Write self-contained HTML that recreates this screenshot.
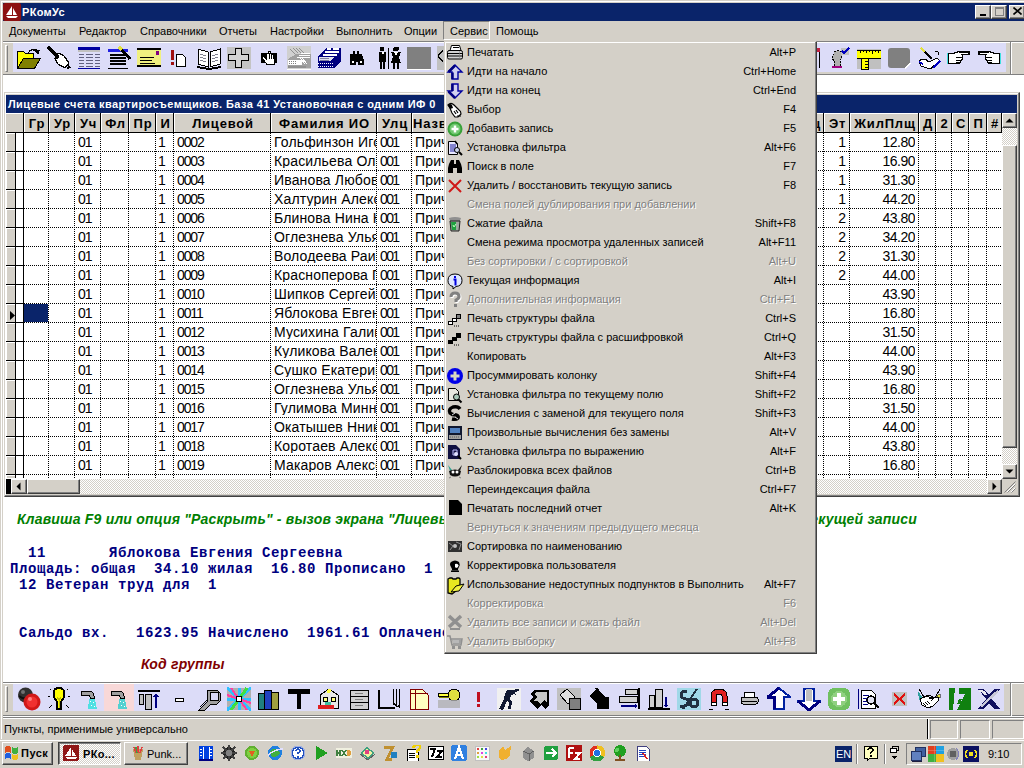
<!DOCTYPE html><html><head><meta charset="utf-8"><style>
*{margin:0;padding:0;box-sizing:border-box}
html,body{width:1024px;height:768px;overflow:hidden;background:#d4d0c8;font-family:"Liberation Sans",sans-serif;font-size:11px;color:#000}
div,span,svg{position:absolute}
.t{white-space:nowrap;line-height:1}
.raised{border-top:1px solid #fff;border-left:1px solid #fff;border-right:1px solid #404040;border-bottom:1px solid #404040;box-shadow:inset -1px -1px 0 #808080}
.sunken{border-top:1px solid #808080;border-left:1px solid #808080;border-right:1px solid #fff;border-bottom:1px solid #fff}
.dither{background-color:#fff;background-image:linear-gradient(45deg,#d4d0c8 25%,transparent 25%,transparent 75%,#d4d0c8 75%),linear-gradient(45deg,#d4d0c8 25%,transparent 25%,transparent 75%,#d4d0c8 75%);background-size:2px 2px;background-position:0 0,1px 1px}
</style></head><body>

<div style="left:0px;top:0px;width:1024px;height:740px;background:#d4d0c8;border-top:1px solid #d4d0c8;border-left:1px solid #d4d0c8"></div>
<div style="left:1px;top:1px;width:1023px;height:1px;background:#fff"></div>
<div style="left:1px;top:1px;width:1px;height:739px;background:#fff"></div>
<div style="left:3px;top:3px;width:1021px;height:18px;background:#0a246a"></div>
<svg style="left:3px;top:3px" width="18" height="18" viewBox="-1 -1 18 18"><rect x="-1" y="-1" width="18" height="18" rx="2" fill="#8c1010"/><path d="M8 2 L8 11 L2 11 Z" fill="#fff"/><path d="M9 4 L9 11 L13 11 Z" fill="#fff"/><path d="M2 12 L14 12 L12 14 L4 14 Z" fill="#fff"/></svg>
<span class="t" style="left:22px;top:7px;color:#fff;font-weight:bold;font-size:11px;letter-spacing:0.3px">РКомУс</span>
<div style="left:975px;top:5px;width:16px;height:14px;background:#d4d0c8"></div>
<div class="raised" style="left:975px;top:5px;width:16px;height:14px;background:#d4d0c8"></div>
<div style="left:991px;top:5px;width:16px;height:14px;background:#d4d0c8"></div>
<div class="raised" style="left:991px;top:5px;width:16px;height:14px;background:#d4d0c8"></div>
<div style="left:1009px;top:5px;width:16px;height:14px;background:#d4d0c8"></div>
<div class="raised" style="left:1009px;top:5px;width:16px;height:14px;background:#d4d0c8"></div>
<div style="left:980px;top:14px;width:6px;height:2px;background:#000"></div>
<div style="left:995px;top:7px;width:9px;height:9px;border:1px solid #808080;border-top-width:2px"></div>
<svg style="left:1013px;top:7px" width="9" height="8" viewBox="0 0 9 8"><path d="M0.5 0.5 L8.5 7.5 M8.5 0.5 L0.5 7.5" stroke="#000" stroke-width="1.6"/></svg>
<span class="t" style="left:9px;top:26px;font-size:11px">Документы</span>
<span class="t" style="left:79px;top:26px;font-size:11px">Редактор</span>
<span class="t" style="left:140px;top:26px;font-size:11px">Справочники</span>
<span class="t" style="left:219px;top:26px;font-size:11px">Отчеты</span>
<span class="t" style="left:270px;top:26px;font-size:11px">Настройки</span>
<span class="t" style="left:336px;top:26px;font-size:11px">Выполнить</span>
<span class="t" style="left:404px;top:26px;font-size:11px">Опции</span>
<span class="t" style="left:450px;top:26px;font-size:11px">Сервис</span>
<span class="t" style="left:496px;top:26px;font-size:11px">Помощь</span>
<div class="sunken" style="left:443px;top:21px;width:47px;height:19px"></div>
<div style="left:3px;top:41px;width:1021px;height:1px;background:#808080"></div>
<div style="left:3px;top:42px;width:1021px;height:1px;background:#fff"></div>
<div style="left:3px;top:43px;width:1021px;height:31px;background:#d4d0c8"></div>
<div style="left:13px;top:43px;width:993px;height:29px;background:#dcdcf8"></div>
<div style="left:3px;top:73px;width:1021px;height:1px;background:#d4d0c8"></div>
<div style="left:5px;top:45px;width:3px;height:27px;border-left:1px solid #fff;border-top:1px solid #fff;border-right:1px solid #808080;border-bottom:1px solid #808080"></div>
<div style="left:1010px;top:42px;width:1px;height:32px;background:#808080"></div>
<div style="left:1011px;top:42px;width:1px;height:32px;background:#fff"></div>
<svg style="left:17px;top:46px" width="24" height="24" viewBox="0 0 24 24" shape-rendering="crispEdges"><path d="M0.5 5.5 h6 l2 2 h8 v15 H0.5 Z" fill="#ffff00" stroke="#000"/><path d="M0.5 22.5 L6.5 12.5 H23.5 L17.5 22.5 Z" fill="#808000" stroke="#000"/><path d="M11 7 q4 -6 9 -1" fill="none" stroke="#000" stroke-width="1.2"/><path d="M17 3 L23 4 L21 9 Z" fill="#000"/></svg>
<svg style="left:47px;top:46px" width="24" height="24" viewBox="0 0 24 24" shape-rendering="crispEdges"><path d="M1 1 L10 10" stroke="#000" stroke-width="3"/><path d="M9 9 q4 -3 8 1 l5 7 l-4 5 l-7 -4 l-3 -5 z" fill="#fff" stroke="#000" stroke-width="1.2"/><circle cx="10" cy="11" r="2" fill="#000"/><path d="M21 19 L24 22 L20 23 Z" fill="#000"/></svg>
<svg style="left:77px;top:46px" width="24" height="24" viewBox="0 0 24 24" shape-rendering="crispEdges"><rect x="1" y="1" width="22" height="3" fill="#0000a0"/><rect x="1" y="4" width="22" height="2" fill="#c0c0c0"/><path d="M2 8h5M9 8h7M18 8h5M2 11h5M9 11h7M18 11h5M2 14h5M9 14h7M18 14h5M2 17h5M9 17h7M18 17h5M2 20h5M9 20h7M18 20h5" stroke="#606080" stroke-width="1"/><rect x="1" y="22" width="22" height="1" fill="#0000a0"/></svg>
<svg style="left:107px;top:46px" width="24" height="24" viewBox="0 0 24 24" shape-rendering="crispEdges"><rect x="1" y="3" width="20" height="3" fill="#2020e0"/><path d="M3 9h16M3 12h16M3 15h16M3 18h16" stroke="#000" stroke-width="2"/><path d="M1 22h20" stroke="#000"/><path d="M12 1 L23 13" stroke="#000" stroke-width="3"/><path d="M12 1 L15 4" stroke="#e0e040" stroke-width="3"/></svg>
<svg style="left:137px;top:46px" width="24" height="24" viewBox="0 0 24 24" shape-rendering="crispEdges"><rect x="0" y="3" width="24" height="17" fill="#f0f080"/><rect x="0" y="2" width="24" height="2" fill="#000"/><rect x="0" y="19" width="24" height="2" fill="#000"/><rect x="19" y="5" width="3" height="4" fill="#800080"/><path d="M3 11h14M3 14h12M3 17h15" stroke="#000" stroke-width="1"/></svg>
<svg style="left:167px;top:46px" width="24" height="24" viewBox="0 0 24 24" shape-rendering="crispEdges"><rect x="4" y="4" width="3" height="10" rx="1" fill="#a01010"/><rect x="4" y="16" width="3" height="3" fill="#a01010"/><path d="M9.5 8.5h6l3 3v8.5h-9z" fill="#fff" stroke="#000"/></svg>
<svg style="left:197px;top:46px" width="24" height="24" viewBox="0 0 24 24" shape-rendering="crispEdges"><path d="M1 3 L11 6 V21 L1 18 Z M23 3 L13 6 V21 L23 18 Z" fill="#fff" stroke="#000"/><path d="M3 8 l6 2M3 11 l6 2M3 14 l6 2M15 10 l6 -2M15 13 l6 -2M15 16 l6 -2" stroke="#808090"/><path d="M0 21 L12 23 L24 21" stroke="#000" stroke-width="2" fill="none"/></svg>
<svg style="left:227px;top:46px" width="24" height="24" viewBox="0 0 24 24" shape-rendering="crispEdges"><rect x="0" y="1" width="24" height="22" fill="#c4c4c4"/><path d="M8.5 2.5h6v6h7v6h-7v7h-6v-7h-7v-6h7z" fill="#d4d4d4" stroke="#000" stroke-width="1.2"/></svg>
<svg style="left:257px;top:46px" width="24" height="24" viewBox="0 0 24 24" shape-rendering="crispEdges"><rect x="4" y="7" width="16" height="10" fill="#000"/><path d="M5 11.5 L7 10.5 L9.5 13 V7 h2 V5.5 h2 V7 h2 V8 h2 V18.5 H10 Z" fill="#fff" stroke="#000"/><path d="M12.5 7 V13 M14.5 7 V13 M16.5 8 V13" stroke="#000"/></svg>
<svg style="left:287px;top:46px" width="24" height="24" viewBox="0 0 24 24" shape-rendering="crispEdges"><rect x="0" y="0" width="26" height="24" fill="#d0d0d0"/><path d="M3 3 L8 8 M6 2 L11 7 M9 2 L14 7 M12 2 L17 7" stroke="#909090" stroke-width="1.2"/><path d="M1 13 L9 8 H24 V22 H1 Z" fill="#a0a0a0"/><path d="M14 7 h9 M12 9 h11 M10 11 h13" stroke="#fff"/><path d="M15 12 l5 6 M13 12 l5 6" stroke="#fff"/><rect x="1" y="14" width="14" height="5" fill="#fff"/><path d="M2 15 h1 M4 15 h1 M6 15 h1 M8 15 h1 M2 17 h1 M4 17 h1 M6 17 h1 M8 17 h1" stroke="#808080"/><rect x="1" y="20" width="18" height="2" fill="#909090"/><path d="M0 23 H25" stroke="#fff"/></svg>
<svg style="left:317px;top:46px" width="24" height="24" viewBox="0 0 24 24" shape-rendering="crispEdges"><path d="M1 10 L9 2 H24 V16 L17 22 H1 Z" fill="#000080"/><path d="M10 3 h4 M16 3 h6 M8 6 h14 M6 9 h14" stroke="#fff" stroke-width="1.2"/><path d="M2 11 H17 L13 15 H2 Z" fill="#e0e0f0"/><path d="M3 12 h9 M3 14 h9" stroke="#8080a0"/><path d="M1 17 h16 M1 20 h16" stroke="#fff" stroke-dasharray="1 1"/></svg>
<svg style="left:347px;top:46px" width="24" height="24" viewBox="0 0 24 24" shape-rendering="crispEdges"><path d="M3 8 h3 v-3 h2 v3 h2 v-3 h2 v3 h3 l2 6 v5 h-6 v-3 h-2 v3 h-6 v-5 z" fill="#000"/><rect x="5" y="15" width="2" height="2" fill="#fff"/><rect x="13" y="15" width="2" height="2" fill="#fff"/></svg>
<svg style="left:377px;top:46px" width="24" height="24" viewBox="0 0 24 24" shape-rendering="crispEdges"><rect x="2" y="6" width="7" height="10" fill="#000"/><path d="M5 6 L6 10 L7 6" fill="#fff"/><rect x="3" y="16" width="2" height="7" fill="#000"/><rect x="6" y="16" width="2" height="7" fill="#000"/><rect x="3" y="1" width="4" height="4" fill="#000"/><rect x="11" y="2" width="1" height="21" fill="#000"/><path d="M14 6 h10 l-2 5 l2 6 h-10 l2 -6 z" fill="#000"/><path d="M17 6 l2 4 l2 -4" fill="#fff"/><rect x="16" y="1" width="6" height="4" rx="2" fill="#000"/><rect x="16" y="17" width="2" height="6" fill="#000"/><rect x="20" y="17" width="2" height="6" fill="#000"/></svg>
<svg style="left:407px;top:46px" width="24" height="24" viewBox="0 0 24 24" shape-rendering="crispEdges"><rect x="0" y="1" width="24" height="22" fill="#808080"/><path d="M0 23h24v-22" stroke="#fff" fill="none"/></svg>
<svg style="left:437px;top:46px" width="24" height="24" viewBox="0 0 24 24" shape-rendering="crispEdges"><rect x="0" y="0" width="8" height="24" fill="#c0c0c0"/><path d="M6 4 L1 10 L6 16" stroke="#000" fill="none" stroke-width="1.2"/></svg>
<svg style="left:797px;top:46px" width="24" height="24" viewBox="0 0 24 24" shape-rendering="crispEdges"><rect x="19" y="2" width="4" height="4" fill="#c02040"/><rect x="22" y="6" width="1" height="16" fill="#000"/></svg>
<svg style="left:827px;top:46px" width="24" height="24" viewBox="0 0 24 24" shape-rendering="crispEdges"><path d="M7 6 q4 -3 7 0 l1 6 l-2 2 l1 6 h-7 l1 -5 l-3 -2 z" fill="#b0b0b0" stroke="#000" stroke-dasharray="2 1"/><rect x="14" y="2" width="8" height="7" fill="#c0c0c0"/><path d="M15 5 l2 2 l5 -5" stroke="#0000c0" stroke-width="2" fill="none"/><rect x="5" y="20" width="10" height="2" fill="#a00080"/></svg>
<svg style="left:857px;top:46px" width="24" height="24" viewBox="0 0 24 24" shape-rendering="crispEdges"><rect x="0" y="3" width="24" height="20" fill="#c0c0c0"/><rect x="0" y="4" width="24" height="8" fill="#ffff00"/><path d="M0 4h24M0 12h24" stroke="#000"/><path d="M3 4v3M6 4v2M9 4v3M12 4v2M15 4v4M18 4v2M21 4v3" stroke="#000"/><rect x="4" y="12" width="7" height="11" fill="#ffff00" stroke="#000"/><path d="M11 15h-3M11 18h-3M11 21h-3" stroke="#000"/></svg>
<svg style="left:887px;top:46px" width="24" height="24" viewBox="0 0 24 24" shape-rendering="crispEdges"><path d="M4 2 H20 Q23 2 23 5 V17 L18 22 H4 Q1 22 1 19 V5 Q1 2 4 2 Z" fill="#808080" shape-rendering="geometricPrecision"/><path d="M18 22.5 L23.5 17" stroke="#fff" stroke-width="1.5"/></svg>
<svg style="left:917px;top:46px" width="24" height="24" viewBox="0 0 24 24" shape-rendering="crispEdges"><path d="M4 2 L15 13" stroke="#000" stroke-width="2"/><path d="M4 2 L8 6" stroke="#e0e040" stroke-width="2"/><path d="M2 15 q5 -4 10 1 l8 -4 l3 3 l-10 8 l-9 -3 z" fill="#fff" stroke="#000" stroke-width="1.2"/><path d="M18 5 q4 0 4 4" stroke="#000" fill="none"/><path d="M2 16 l4 2" stroke="#0000c0" stroke-width="2"/><path d="M16 22 l7 -7" stroke="#0000c0" stroke-width="1.5"/></svg>
<svg style="left:947px;top:46px" width="24" height="24" viewBox="0 0 24 24" shape-rendering="crispEdges"><path d="M1.5 7.5 h5 q3 -2 6 -1.5 h9.5 v2.5 h-7 q1 2 0 3 q1 2 -1 3 q0 2 -2 2.5 q-3 1.5 -6 0.5 h-4.5 z" fill="#fff" stroke="#000" stroke-width="1.1"/><path d="M9 11.5 h5 M9 14.5 h5 M9 17 h4" stroke="#000" stroke-width="1.1"/><rect x="0" y="7" width="1" height="11" fill="#40e0e0"/></svg>
<svg style="left:977px;top:46px" width="24" height="24" viewBox="0 0 24 24" shape-rendering="crispEdges"><path d="M22.5 7.5 h-5 q-3 -2 -6 -1.5 h-9.5 v2.5 h7 q-1 2 0 3 q-1 2 1 3 q0 2 2 2.5 q3 1.5 6 0.5 h4.5 z" fill="#fff" stroke="#000" stroke-width="1.1"/><path d="M15 11.5 h-5 M15 14.5 h-5 M15 17 h-4" stroke="#000" stroke-width="1.1"/><rect x="23" y="7" width="1" height="11" fill="#40e0e0"/></svg>
<div style="left:3px;top:75px;width:1021px;height:607px;background:#fff"></div>
<div style="left:3px;top:74px;width:1021px;height:1px;background:#808080"></div>
<div style="left:4px;top:92px;width:1016px;height:405px;background:#d4d0c8;border-top:1px solid #d4d0c8;border-left:1px solid #d4d0c8;border-right:1px solid #404040;border-bottom:1px solid #404040"></div>
<div style="left:5px;top:93px;width:1014px;height:1px;background:#fff"></div>
<div style="left:5px;top:93px;width:1px;height:403px;background:#fff"></div>
<div style="left:5px;top:495px;width:1014px;height:1px;background:#808080"></div>
<div style="left:1018px;top:93px;width:1px;height:403px;background:#808080"></div>
<div style="left:6px;top:95px;width:1011px;height:18px;background:#0a246a"></div>
<span class="t" style="left:8px;top:99px;color:#fff;font-weight:bold;font-size:11px;letter-spacing:0.4px">Лицевые счета квартиросъемщиков. База 41 Установочная с одним ИФ 0</span>
<div style="left:6px;top:113px;width:996px;height:366px;background:#fff"></div>
<div style="left:6px;top:113px;width:996px;height:19px;background:#d4d0c8"></div>
<div style="left:6px;top:113px;width:996px;height:1px;background:#fff"></div>
<div style="left:6px;top:132px;width:996px;height:1px;background:#000"></div>
<div style="left:23px;top:113px;width:1px;height:19px;background:#000"></div>
<div style="left:24px;top:114px;width:1px;height:18px;background:#fff"></div>
<div style="left:48px;top:113px;width:1px;height:19px;background:#000"></div>
<div style="left:49px;top:114px;width:1px;height:18px;background:#fff"></div>
<div style="left:74px;top:113px;width:1px;height:19px;background:#000"></div>
<div style="left:75px;top:114px;width:1px;height:18px;background:#fff"></div>
<div style="left:100px;top:113px;width:1px;height:19px;background:#000"></div>
<div style="left:101px;top:114px;width:1px;height:18px;background:#fff"></div>
<div style="left:128px;top:113px;width:1px;height:19px;background:#000"></div>
<div style="left:129px;top:114px;width:1px;height:18px;background:#fff"></div>
<div style="left:155px;top:113px;width:1px;height:19px;background:#000"></div>
<div style="left:156px;top:114px;width:1px;height:18px;background:#fff"></div>
<div style="left:173px;top:113px;width:1px;height:19px;background:#000"></div>
<div style="left:174px;top:114px;width:1px;height:18px;background:#fff"></div>
<div style="left:270px;top:113px;width:1px;height:19px;background:#000"></div>
<div style="left:271px;top:114px;width:1px;height:18px;background:#fff"></div>
<div style="left:376px;top:113px;width:1px;height:19px;background:#000"></div>
<div style="left:377px;top:114px;width:1px;height:18px;background:#fff"></div>
<div style="left:411px;top:113px;width:1px;height:19px;background:#000"></div>
<div style="left:412px;top:114px;width:1px;height:18px;background:#fff"></div>
<div style="left:500px;top:113px;width:1px;height:19px;background:#000"></div>
<div style="left:501px;top:114px;width:1px;height:18px;background:#fff"></div>
<div style="left:600px;top:113px;width:1px;height:19px;background:#000"></div>
<div style="left:601px;top:114px;width:1px;height:18px;background:#fff"></div>
<div style="left:700px;top:113px;width:1px;height:19px;background:#000"></div>
<div style="left:701px;top:114px;width:1px;height:18px;background:#fff"></div>
<div style="left:800px;top:113px;width:1px;height:19px;background:#000"></div>
<div style="left:801px;top:114px;width:1px;height:18px;background:#fff"></div>
<div style="left:823px;top:113px;width:1px;height:19px;background:#000"></div>
<div style="left:824px;top:114px;width:1px;height:18px;background:#fff"></div>
<div style="left:849px;top:113px;width:1px;height:19px;background:#000"></div>
<div style="left:850px;top:114px;width:1px;height:18px;background:#fff"></div>
<div style="left:918px;top:113px;width:1px;height:19px;background:#000"></div>
<div style="left:919px;top:114px;width:1px;height:18px;background:#fff"></div>
<div style="left:935px;top:113px;width:1px;height:19px;background:#000"></div>
<div style="left:936px;top:114px;width:1px;height:18px;background:#fff"></div>
<div style="left:951px;top:113px;width:1px;height:19px;background:#000"></div>
<div style="left:952px;top:114px;width:1px;height:18px;background:#fff"></div>
<div style="left:968px;top:113px;width:1px;height:19px;background:#000"></div>
<div style="left:969px;top:114px;width:1px;height:18px;background:#fff"></div>
<div style="left:986px;top:113px;width:1px;height:19px;background:#000"></div>
<div style="left:987px;top:114px;width:1px;height:18px;background:#fff"></div>
<div style="left:1001px;top:113px;width:1px;height:19px;background:#000"></div>
<div style="left:1002px;top:114px;width:1px;height:18px;background:#fff"></div>
<div style="left:25px;top:116px;width:24px;height:16px;overflow:hidden;text-align:center;font-weight:bold;font-size:13px;letter-spacing:0.8px;line-height:15px">Гр</div>
<div style="left:50px;top:116px;width:25px;height:16px;overflow:hidden;text-align:center;font-weight:bold;font-size:13px;letter-spacing:0.8px;line-height:15px">Ур</div>
<div style="left:76px;top:116px;width:25px;height:16px;overflow:hidden;text-align:center;font-weight:bold;font-size:13px;letter-spacing:0.8px;line-height:15px">Уч</div>
<div style="left:102px;top:116px;width:27px;height:16px;overflow:hidden;text-align:center;font-weight:bold;font-size:13px;letter-spacing:0.8px;line-height:15px">Фл</div>
<div style="left:130px;top:116px;width:26px;height:16px;overflow:hidden;text-align:center;font-weight:bold;font-size:13px;letter-spacing:0.8px;line-height:15px">Пр</div>
<div style="left:157px;top:116px;width:17px;height:16px;overflow:hidden;text-align:center;font-weight:bold;font-size:13px;letter-spacing:0.8px;line-height:15px">И</div>
<div style="left:175px;top:116px;width:96px;height:16px;overflow:hidden;text-align:center;font-weight:bold;font-size:13px;letter-spacing:0.8px;line-height:15px">Лицевой</div>
<div style="left:272px;top:116px;width:105px;height:16px;overflow:hidden;text-align:center;font-weight:bold;font-size:13px;letter-spacing:0.8px;line-height:15px">Фамилия ИО</div>
<div style="left:378px;top:116px;width:34px;height:16px;overflow:hidden;text-align:center;font-weight:bold;font-size:13px;letter-spacing:0.8px;line-height:15px">Улц</div>
<div style="left:413px;top:116px;width:88px;height:16px;overflow:hidden;text-align:center;font-weight:bold;font-size:13px;letter-spacing:0.8px;line-height:15px"></div>
<div style="left:825px;top:116px;width:25px;height:16px;overflow:hidden;text-align:center;font-weight:bold;font-size:13px;letter-spacing:0.8px;line-height:15px">Эт</div>
<div style="left:851px;top:116px;width:68px;height:16px;overflow:hidden;text-align:center;font-weight:bold;font-size:13px;letter-spacing:0.8px;line-height:15px">ЖилПлщ</div>
<div style="left:920px;top:116px;width:16px;height:16px;overflow:hidden;text-align:center;font-weight:bold;font-size:13px;letter-spacing:0.8px;line-height:15px">Д</div>
<div style="left:937px;top:116px;width:15px;height:16px;overflow:hidden;text-align:center;font-weight:bold;font-size:13px;letter-spacing:0.8px;line-height:15px">2</div>
<div style="left:953px;top:116px;width:16px;height:16px;overflow:hidden;text-align:center;font-weight:bold;font-size:13px;letter-spacing:0.8px;line-height:15px">С</div>
<div style="left:970px;top:116px;width:17px;height:16px;overflow:hidden;text-align:center;font-weight:bold;font-size:13px;letter-spacing:0.8px;line-height:15px">П</div>
<div style="left:988px;top:116px;width:14px;height:16px;overflow:hidden;text-align:center;font-weight:bold;font-size:13px;letter-spacing:0.8px;line-height:15px">#</div>
<div style="left:413px;top:116px;font-weight:bold;font-size:13px;letter-spacing:0.8px;line-height:15px">Назв</div>
<div style="left:700px;top:116px;width:121px;text-align:right;font-weight:bold;font-size:13px;letter-spacing:0.8px;line-height:15px">ОбПлщ</div>
<div style="left:6px;top:133px;width:9px;height:345px;background:#d4d0c8"></div>
<div style="left:6px;top:133px;width:9px;height:1px;background:#fff"></div>
<div style="left:6px;top:152px;width:9px;height:1px;background:#fff"></div>
<div style="left:6px;top:171px;width:9px;height:1px;background:#fff"></div>
<div style="left:6px;top:190px;width:9px;height:1px;background:#fff"></div>
<div style="left:6px;top:209px;width:9px;height:1px;background:#fff"></div>
<div style="left:6px;top:228px;width:9px;height:1px;background:#fff"></div>
<div style="left:6px;top:247px;width:9px;height:1px;background:#fff"></div>
<div style="left:6px;top:266px;width:9px;height:1px;background:#fff"></div>
<div style="left:6px;top:285px;width:9px;height:1px;background:#fff"></div>
<div style="left:6px;top:304px;width:9px;height:1px;background:#fff"></div>
<div style="left:6px;top:323px;width:9px;height:1px;background:#fff"></div>
<div style="left:6px;top:342px;width:9px;height:1px;background:#fff"></div>
<div style="left:6px;top:361px;width:9px;height:1px;background:#fff"></div>
<div style="left:6px;top:380px;width:9px;height:1px;background:#fff"></div>
<div style="left:6px;top:399px;width:9px;height:1px;background:#fff"></div>
<div style="left:6px;top:418px;width:9px;height:1px;background:#fff"></div>
<div style="left:6px;top:437px;width:9px;height:1px;background:#fff"></div>
<div style="left:6px;top:456px;width:9px;height:1px;background:#fff"></div>
<div style="left:6px;top:475px;width:9px;height:1px;background:#fff"></div>
<div style="left:6px;top:133px;width:1px;height:345px;background:#fff"></div>
<div style="left:15px;top:133px;width:1px;height:345px;background:#000"></div>
<div style="left:23px;top:133px;width:1px;height:345px;background:#000"></div>
<div style="left:24px;top:151px;width:978px;height:1px;background-image:repeating-linear-gradient(90deg,#000 0 1px,transparent 1px 2px)"></div>
<div style="left:6px;top:151px;width:18px;height:1px;background:#000"></div>
<div style="left:24px;top:170px;width:978px;height:1px;background-image:repeating-linear-gradient(90deg,#000 0 1px,transparent 1px 2px)"></div>
<div style="left:6px;top:170px;width:18px;height:1px;background:#000"></div>
<div style="left:24px;top:189px;width:978px;height:1px;background-image:repeating-linear-gradient(90deg,#000 0 1px,transparent 1px 2px)"></div>
<div style="left:6px;top:189px;width:18px;height:1px;background:#000"></div>
<div style="left:24px;top:208px;width:978px;height:1px;background-image:repeating-linear-gradient(90deg,#000 0 1px,transparent 1px 2px)"></div>
<div style="left:6px;top:208px;width:18px;height:1px;background:#000"></div>
<div style="left:24px;top:227px;width:978px;height:1px;background-image:repeating-linear-gradient(90deg,#000 0 1px,transparent 1px 2px)"></div>
<div style="left:6px;top:227px;width:18px;height:1px;background:#000"></div>
<div style="left:24px;top:246px;width:978px;height:1px;background-image:repeating-linear-gradient(90deg,#000 0 1px,transparent 1px 2px)"></div>
<div style="left:6px;top:246px;width:18px;height:1px;background:#000"></div>
<div style="left:24px;top:265px;width:978px;height:1px;background-image:repeating-linear-gradient(90deg,#000 0 1px,transparent 1px 2px)"></div>
<div style="left:6px;top:265px;width:18px;height:1px;background:#000"></div>
<div style="left:24px;top:284px;width:978px;height:1px;background-image:repeating-linear-gradient(90deg,#000 0 1px,transparent 1px 2px)"></div>
<div style="left:6px;top:284px;width:18px;height:1px;background:#000"></div>
<div style="left:24px;top:303px;width:978px;height:1px;background-image:repeating-linear-gradient(90deg,#000 0 1px,transparent 1px 2px)"></div>
<div style="left:6px;top:303px;width:18px;height:1px;background:#000"></div>
<div style="left:24px;top:322px;width:978px;height:1px;background-image:repeating-linear-gradient(90deg,#000 0 1px,transparent 1px 2px)"></div>
<div style="left:6px;top:322px;width:18px;height:1px;background:#000"></div>
<div style="left:24px;top:341px;width:978px;height:1px;background-image:repeating-linear-gradient(90deg,#000 0 1px,transparent 1px 2px)"></div>
<div style="left:6px;top:341px;width:18px;height:1px;background:#000"></div>
<div style="left:24px;top:360px;width:978px;height:1px;background-image:repeating-linear-gradient(90deg,#000 0 1px,transparent 1px 2px)"></div>
<div style="left:6px;top:360px;width:18px;height:1px;background:#000"></div>
<div style="left:24px;top:379px;width:978px;height:1px;background-image:repeating-linear-gradient(90deg,#000 0 1px,transparent 1px 2px)"></div>
<div style="left:6px;top:379px;width:18px;height:1px;background:#000"></div>
<div style="left:24px;top:398px;width:978px;height:1px;background-image:repeating-linear-gradient(90deg,#000 0 1px,transparent 1px 2px)"></div>
<div style="left:6px;top:398px;width:18px;height:1px;background:#000"></div>
<div style="left:24px;top:417px;width:978px;height:1px;background-image:repeating-linear-gradient(90deg,#000 0 1px,transparent 1px 2px)"></div>
<div style="left:6px;top:417px;width:18px;height:1px;background:#000"></div>
<div style="left:24px;top:436px;width:978px;height:1px;background-image:repeating-linear-gradient(90deg,#000 0 1px,transparent 1px 2px)"></div>
<div style="left:6px;top:436px;width:18px;height:1px;background:#000"></div>
<div style="left:24px;top:455px;width:978px;height:1px;background-image:repeating-linear-gradient(90deg,#000 0 1px,transparent 1px 2px)"></div>
<div style="left:6px;top:455px;width:18px;height:1px;background:#000"></div>
<div style="left:24px;top:474px;width:978px;height:1px;background-image:repeating-linear-gradient(90deg,#000 0 1px,transparent 1px 2px)"></div>
<div style="left:6px;top:474px;width:18px;height:1px;background:#000"></div>
<div style="left:48px;top:133px;width:1px;height:346px;background-image:repeating-linear-gradient(180deg,#000 0 1px,transparent 1px 2px)"></div>
<div style="left:74px;top:133px;width:1px;height:346px;background-image:repeating-linear-gradient(180deg,#000 0 1px,transparent 1px 2px)"></div>
<div style="left:100px;top:133px;width:1px;height:346px;background-image:repeating-linear-gradient(180deg,#000 0 1px,transparent 1px 2px)"></div>
<div style="left:128px;top:133px;width:1px;height:346px;background-image:repeating-linear-gradient(180deg,#000 0 1px,transparent 1px 2px)"></div>
<div style="left:155px;top:133px;width:1px;height:346px;background-image:repeating-linear-gradient(180deg,#000 0 1px,transparent 1px 2px)"></div>
<div style="left:173px;top:133px;width:1px;height:346px;background-image:repeating-linear-gradient(180deg,#000 0 1px,transparent 1px 2px)"></div>
<div style="left:270px;top:133px;width:1px;height:346px;background-image:repeating-linear-gradient(180deg,#000 0 1px,transparent 1px 2px)"></div>
<div style="left:376px;top:133px;width:1px;height:346px;background-image:repeating-linear-gradient(180deg,#000 0 1px,transparent 1px 2px)"></div>
<div style="left:411px;top:133px;width:1px;height:346px;background-image:repeating-linear-gradient(180deg,#000 0 1px,transparent 1px 2px)"></div>
<div style="left:500px;top:133px;width:1px;height:346px;background-image:repeating-linear-gradient(180deg,#000 0 1px,transparent 1px 2px)"></div>
<div style="left:600px;top:133px;width:1px;height:346px;background-image:repeating-linear-gradient(180deg,#000 0 1px,transparent 1px 2px)"></div>
<div style="left:700px;top:133px;width:1px;height:346px;background-image:repeating-linear-gradient(180deg,#000 0 1px,transparent 1px 2px)"></div>
<div style="left:800px;top:133px;width:1px;height:346px;background-image:repeating-linear-gradient(180deg,#000 0 1px,transparent 1px 2px)"></div>
<div style="left:823px;top:133px;width:1px;height:346px;background-image:repeating-linear-gradient(180deg,#000 0 1px,transparent 1px 2px)"></div>
<div style="left:849px;top:133px;width:1px;height:346px;background-image:repeating-linear-gradient(180deg,#000 0 1px,transparent 1px 2px)"></div>
<div style="left:918px;top:133px;width:1px;height:346px;background-image:repeating-linear-gradient(180deg,#000 0 1px,transparent 1px 2px)"></div>
<div style="left:935px;top:133px;width:1px;height:346px;background-image:repeating-linear-gradient(180deg,#000 0 1px,transparent 1px 2px)"></div>
<div style="left:951px;top:133px;width:1px;height:346px;background-image:repeating-linear-gradient(180deg,#000 0 1px,transparent 1px 2px)"></div>
<div style="left:968px;top:133px;width:1px;height:346px;background-image:repeating-linear-gradient(180deg,#000 0 1px,transparent 1px 2px)"></div>
<div style="left:986px;top:133px;width:1px;height:346px;background-image:repeating-linear-gradient(180deg,#000 0 1px,transparent 1px 2px)"></div>
<div style="left:24px;top:304px;width:24px;height:18px;background:#0a246a"></div>
<svg style="left:10px;top:311px" width="5" height="9" viewBox="0 0 5 9"><path d="M0 0 L5 4.5 L0 9 Z" fill="#000"/></svg>
<div style="left:78px;top:135px;width:22px;height:14px;font-size:14px;line-height:1;white-space:nowrap;overflow:hidden;letter-spacing:-1.1px">01</div>
<div style="left:158px;top:135px;width:12px;height:14px;font-size:14px;line-height:1;white-space:nowrap;overflow:hidden">1</div>
<div style="left:177px;top:135px;width:90px;height:14px;font-size:14px;line-height:1;white-space:nowrap;overflow:hidden;letter-spacing:-1.1px">0002</div>
<div style="left:274px;top:135px;width:102px;height:14px;font-size:14px;line-height:1;white-space:nowrap;overflow:hidden;letter-spacing:0.15px">Гольфинзон Игорь</div>
<div style="left:380px;top:135px;width:31px;height:14px;font-size:14px;line-height:1;white-space:nowrap;overflow:hidden;letter-spacing:-1.6px">001</div>
<div style="left:415px;top:135px;width:40px;height:14px;font-size:14px;line-height:1;white-space:nowrap;overflow:hidden;letter-spacing:0.15px">Прич</div>
<div style="left:824px;top:135px;width:22px;height:14px;font-size:14px;line-height:1;white-space:nowrap;overflow:hidden;text-align:right">1</div>
<div style="left:850px;top:135px;width:65px;height:14px;font-size:14px;line-height:1;white-space:nowrap;overflow:hidden;text-align:right;letter-spacing:-0.5px">12.80</div>
<div style="left:78px;top:154px;width:22px;height:14px;font-size:14px;line-height:1;white-space:nowrap;overflow:hidden;letter-spacing:-1.1px">01</div>
<div style="left:158px;top:154px;width:12px;height:14px;font-size:14px;line-height:1;white-space:nowrap;overflow:hidden">1</div>
<div style="left:177px;top:154px;width:90px;height:14px;font-size:14px;line-height:1;white-space:nowrap;overflow:hidden;letter-spacing:-1.1px">0003</div>
<div style="left:274px;top:154px;width:102px;height:14px;font-size:14px;line-height:1;white-space:nowrap;overflow:hidden;letter-spacing:0.15px">Красильева Ольга</div>
<div style="left:380px;top:154px;width:31px;height:14px;font-size:14px;line-height:1;white-space:nowrap;overflow:hidden;letter-spacing:-1.6px">001</div>
<div style="left:415px;top:154px;width:40px;height:14px;font-size:14px;line-height:1;white-space:nowrap;overflow:hidden;letter-spacing:0.15px">Прич</div>
<div style="left:824px;top:154px;width:22px;height:14px;font-size:14px;line-height:1;white-space:nowrap;overflow:hidden;text-align:right">1</div>
<div style="left:850px;top:154px;width:65px;height:14px;font-size:14px;line-height:1;white-space:nowrap;overflow:hidden;text-align:right;letter-spacing:-0.5px">16.90</div>
<div style="left:78px;top:173px;width:22px;height:14px;font-size:14px;line-height:1;white-space:nowrap;overflow:hidden;letter-spacing:-1.1px">01</div>
<div style="left:158px;top:173px;width:12px;height:14px;font-size:14px;line-height:1;white-space:nowrap;overflow:hidden">1</div>
<div style="left:177px;top:173px;width:90px;height:14px;font-size:14px;line-height:1;white-space:nowrap;overflow:hidden;letter-spacing:-1.1px">0004</div>
<div style="left:274px;top:173px;width:102px;height:14px;font-size:14px;line-height:1;white-space:nowrap;overflow:hidden;letter-spacing:0.15px">Иванова Любовь</div>
<div style="left:380px;top:173px;width:31px;height:14px;font-size:14px;line-height:1;white-space:nowrap;overflow:hidden;letter-spacing:-1.6px">001</div>
<div style="left:415px;top:173px;width:40px;height:14px;font-size:14px;line-height:1;white-space:nowrap;overflow:hidden;letter-spacing:0.15px">Прич</div>
<div style="left:824px;top:173px;width:22px;height:14px;font-size:14px;line-height:1;white-space:nowrap;overflow:hidden;text-align:right">1</div>
<div style="left:850px;top:173px;width:65px;height:14px;font-size:14px;line-height:1;white-space:nowrap;overflow:hidden;text-align:right;letter-spacing:-0.5px">31.30</div>
<div style="left:78px;top:192px;width:22px;height:14px;font-size:14px;line-height:1;white-space:nowrap;overflow:hidden;letter-spacing:-1.1px">01</div>
<div style="left:158px;top:192px;width:12px;height:14px;font-size:14px;line-height:1;white-space:nowrap;overflow:hidden">1</div>
<div style="left:177px;top:192px;width:90px;height:14px;font-size:14px;line-height:1;white-space:nowrap;overflow:hidden;letter-spacing:-1.1px">0005</div>
<div style="left:274px;top:192px;width:102px;height:14px;font-size:14px;line-height:1;white-space:nowrap;overflow:hidden;letter-spacing:0.15px">Халтурин Алексей</div>
<div style="left:380px;top:192px;width:31px;height:14px;font-size:14px;line-height:1;white-space:nowrap;overflow:hidden;letter-spacing:-1.6px">001</div>
<div style="left:415px;top:192px;width:40px;height:14px;font-size:14px;line-height:1;white-space:nowrap;overflow:hidden;letter-spacing:0.15px">Прич</div>
<div style="left:824px;top:192px;width:22px;height:14px;font-size:14px;line-height:1;white-space:nowrap;overflow:hidden;text-align:right">1</div>
<div style="left:850px;top:192px;width:65px;height:14px;font-size:14px;line-height:1;white-space:nowrap;overflow:hidden;text-align:right;letter-spacing:-0.5px">44.20</div>
<div style="left:78px;top:211px;width:22px;height:14px;font-size:14px;line-height:1;white-space:nowrap;overflow:hidden;letter-spacing:-1.1px">01</div>
<div style="left:158px;top:211px;width:12px;height:14px;font-size:14px;line-height:1;white-space:nowrap;overflow:hidden">1</div>
<div style="left:177px;top:211px;width:90px;height:14px;font-size:14px;line-height:1;white-space:nowrap;overflow:hidden;letter-spacing:-1.1px">0006</div>
<div style="left:274px;top:211px;width:102px;height:14px;font-size:14px;line-height:1;white-space:nowrap;overflow:hidden;letter-spacing:0.15px">Блинова Нина Н</div>
<div style="left:380px;top:211px;width:31px;height:14px;font-size:14px;line-height:1;white-space:nowrap;overflow:hidden;letter-spacing:-1.6px">001</div>
<div style="left:415px;top:211px;width:40px;height:14px;font-size:14px;line-height:1;white-space:nowrap;overflow:hidden;letter-spacing:0.15px">Прич</div>
<div style="left:824px;top:211px;width:22px;height:14px;font-size:14px;line-height:1;white-space:nowrap;overflow:hidden;text-align:right">2</div>
<div style="left:850px;top:211px;width:65px;height:14px;font-size:14px;line-height:1;white-space:nowrap;overflow:hidden;text-align:right;letter-spacing:-0.5px">43.80</div>
<div style="left:78px;top:230px;width:22px;height:14px;font-size:14px;line-height:1;white-space:nowrap;overflow:hidden;letter-spacing:-1.1px">01</div>
<div style="left:158px;top:230px;width:12px;height:14px;font-size:14px;line-height:1;white-space:nowrap;overflow:hidden">1</div>
<div style="left:177px;top:230px;width:90px;height:14px;font-size:14px;line-height:1;white-space:nowrap;overflow:hidden;letter-spacing:-1.1px">0007</div>
<div style="left:274px;top:230px;width:102px;height:14px;font-size:14px;line-height:1;white-space:nowrap;overflow:hidden;letter-spacing:0.15px">Оглезнева Ульяна</div>
<div style="left:380px;top:230px;width:31px;height:14px;font-size:14px;line-height:1;white-space:nowrap;overflow:hidden;letter-spacing:-1.6px">001</div>
<div style="left:415px;top:230px;width:40px;height:14px;font-size:14px;line-height:1;white-space:nowrap;overflow:hidden;letter-spacing:0.15px">Прич</div>
<div style="left:824px;top:230px;width:22px;height:14px;font-size:14px;line-height:1;white-space:nowrap;overflow:hidden;text-align:right">2</div>
<div style="left:850px;top:230px;width:65px;height:14px;font-size:14px;line-height:1;white-space:nowrap;overflow:hidden;text-align:right;letter-spacing:-0.5px">34.20</div>
<div style="left:78px;top:249px;width:22px;height:14px;font-size:14px;line-height:1;white-space:nowrap;overflow:hidden;letter-spacing:-1.1px">01</div>
<div style="left:158px;top:249px;width:12px;height:14px;font-size:14px;line-height:1;white-space:nowrap;overflow:hidden">1</div>
<div style="left:177px;top:249px;width:90px;height:14px;font-size:14px;line-height:1;white-space:nowrap;overflow:hidden;letter-spacing:-1.1px">0008</div>
<div style="left:274px;top:249px;width:102px;height:14px;font-size:14px;line-height:1;white-space:nowrap;overflow:hidden;letter-spacing:0.15px">Володеева Раиса</div>
<div style="left:380px;top:249px;width:31px;height:14px;font-size:14px;line-height:1;white-space:nowrap;overflow:hidden;letter-spacing:-1.6px">001</div>
<div style="left:415px;top:249px;width:40px;height:14px;font-size:14px;line-height:1;white-space:nowrap;overflow:hidden;letter-spacing:0.15px">Прич</div>
<div style="left:824px;top:249px;width:22px;height:14px;font-size:14px;line-height:1;white-space:nowrap;overflow:hidden;text-align:right">2</div>
<div style="left:850px;top:249px;width:65px;height:14px;font-size:14px;line-height:1;white-space:nowrap;overflow:hidden;text-align:right;letter-spacing:-0.5px">31.30</div>
<div style="left:78px;top:268px;width:22px;height:14px;font-size:14px;line-height:1;white-space:nowrap;overflow:hidden;letter-spacing:-1.1px">01</div>
<div style="left:158px;top:268px;width:12px;height:14px;font-size:14px;line-height:1;white-space:nowrap;overflow:hidden">1</div>
<div style="left:177px;top:268px;width:90px;height:14px;font-size:14px;line-height:1;white-space:nowrap;overflow:hidden;letter-spacing:-1.1px">0009</div>
<div style="left:274px;top:268px;width:102px;height:14px;font-size:14px;line-height:1;white-space:nowrap;overflow:hidden;letter-spacing:0.15px">Красноперова Г</div>
<div style="left:380px;top:268px;width:31px;height:14px;font-size:14px;line-height:1;white-space:nowrap;overflow:hidden;letter-spacing:-1.6px">001</div>
<div style="left:415px;top:268px;width:40px;height:14px;font-size:14px;line-height:1;white-space:nowrap;overflow:hidden;letter-spacing:0.15px">Прич</div>
<div style="left:824px;top:268px;width:22px;height:14px;font-size:14px;line-height:1;white-space:nowrap;overflow:hidden;text-align:right">2</div>
<div style="left:850px;top:268px;width:65px;height:14px;font-size:14px;line-height:1;white-space:nowrap;overflow:hidden;text-align:right;letter-spacing:-0.5px">44.00</div>
<div style="left:78px;top:287px;width:22px;height:14px;font-size:14px;line-height:1;white-space:nowrap;overflow:hidden;letter-spacing:-1.1px">01</div>
<div style="left:158px;top:287px;width:12px;height:14px;font-size:14px;line-height:1;white-space:nowrap;overflow:hidden">1</div>
<div style="left:177px;top:287px;width:90px;height:14px;font-size:14px;line-height:1;white-space:nowrap;overflow:hidden;letter-spacing:-1.1px">0010</div>
<div style="left:274px;top:287px;width:102px;height:14px;font-size:14px;line-height:1;white-space:nowrap;overflow:hidden;letter-spacing:0.15px">Шипков Сергей</div>
<div style="left:380px;top:287px;width:31px;height:14px;font-size:14px;line-height:1;white-space:nowrap;overflow:hidden;letter-spacing:-1.6px">001</div>
<div style="left:415px;top:287px;width:40px;height:14px;font-size:14px;line-height:1;white-space:nowrap;overflow:hidden;letter-spacing:0.15px">Прич</div>
<div style="left:850px;top:287px;width:65px;height:14px;font-size:14px;line-height:1;white-space:nowrap;overflow:hidden;text-align:right;letter-spacing:-0.5px">43.90</div>
<div style="left:78px;top:306px;width:22px;height:14px;font-size:14px;line-height:1;white-space:nowrap;overflow:hidden;letter-spacing:-1.1px">01</div>
<div style="left:158px;top:306px;width:12px;height:14px;font-size:14px;line-height:1;white-space:nowrap;overflow:hidden">1</div>
<div style="left:177px;top:306px;width:90px;height:14px;font-size:14px;line-height:1;white-space:nowrap;overflow:hidden;letter-spacing:-1.1px">0011</div>
<div style="left:274px;top:306px;width:102px;height:14px;font-size:14px;line-height:1;white-space:nowrap;overflow:hidden;letter-spacing:0.15px">Яблокова Евгения</div>
<div style="left:380px;top:306px;width:31px;height:14px;font-size:14px;line-height:1;white-space:nowrap;overflow:hidden;letter-spacing:-1.6px">001</div>
<div style="left:415px;top:306px;width:40px;height:14px;font-size:14px;line-height:1;white-space:nowrap;overflow:hidden;letter-spacing:0.15px">Прич</div>
<div style="left:850px;top:306px;width:65px;height:14px;font-size:14px;line-height:1;white-space:nowrap;overflow:hidden;text-align:right;letter-spacing:-0.5px">16.80</div>
<div style="left:78px;top:325px;width:22px;height:14px;font-size:14px;line-height:1;white-space:nowrap;overflow:hidden;letter-spacing:-1.1px">01</div>
<div style="left:158px;top:325px;width:12px;height:14px;font-size:14px;line-height:1;white-space:nowrap;overflow:hidden">1</div>
<div style="left:177px;top:325px;width:90px;height:14px;font-size:14px;line-height:1;white-space:nowrap;overflow:hidden;letter-spacing:-1.1px">0012</div>
<div style="left:274px;top:325px;width:102px;height:14px;font-size:14px;line-height:1;white-space:nowrap;overflow:hidden;letter-spacing:0.15px">Мусихина Галина</div>
<div style="left:380px;top:325px;width:31px;height:14px;font-size:14px;line-height:1;white-space:nowrap;overflow:hidden;letter-spacing:-1.6px">001</div>
<div style="left:415px;top:325px;width:40px;height:14px;font-size:14px;line-height:1;white-space:nowrap;overflow:hidden;letter-spacing:0.15px">Прич</div>
<div style="left:850px;top:325px;width:65px;height:14px;font-size:14px;line-height:1;white-space:nowrap;overflow:hidden;text-align:right;letter-spacing:-0.5px">31.50</div>
<div style="left:78px;top:344px;width:22px;height:14px;font-size:14px;line-height:1;white-space:nowrap;overflow:hidden;letter-spacing:-1.1px">01</div>
<div style="left:158px;top:344px;width:12px;height:14px;font-size:14px;line-height:1;white-space:nowrap;overflow:hidden">1</div>
<div style="left:177px;top:344px;width:90px;height:14px;font-size:14px;line-height:1;white-space:nowrap;overflow:hidden;letter-spacing:-1.1px">0013</div>
<div style="left:274px;top:344px;width:102px;height:14px;font-size:14px;line-height:1;white-space:nowrap;overflow:hidden;letter-spacing:0.15px">Куликова Валентина</div>
<div style="left:380px;top:344px;width:31px;height:14px;font-size:14px;line-height:1;white-space:nowrap;overflow:hidden;letter-spacing:-1.6px">001</div>
<div style="left:415px;top:344px;width:40px;height:14px;font-size:14px;line-height:1;white-space:nowrap;overflow:hidden;letter-spacing:0.15px">Прич</div>
<div style="left:850px;top:344px;width:65px;height:14px;font-size:14px;line-height:1;white-space:nowrap;overflow:hidden;text-align:right;letter-spacing:-0.5px">44.00</div>
<div style="left:78px;top:363px;width:22px;height:14px;font-size:14px;line-height:1;white-space:nowrap;overflow:hidden;letter-spacing:-1.1px">01</div>
<div style="left:158px;top:363px;width:12px;height:14px;font-size:14px;line-height:1;white-space:nowrap;overflow:hidden">1</div>
<div style="left:177px;top:363px;width:90px;height:14px;font-size:14px;line-height:1;white-space:nowrap;overflow:hidden;letter-spacing:-1.1px">0014</div>
<div style="left:274px;top:363px;width:102px;height:14px;font-size:14px;line-height:1;white-space:nowrap;overflow:hidden;letter-spacing:0.15px">Сушко Екатерина</div>
<div style="left:380px;top:363px;width:31px;height:14px;font-size:14px;line-height:1;white-space:nowrap;overflow:hidden;letter-spacing:-1.6px">001</div>
<div style="left:415px;top:363px;width:40px;height:14px;font-size:14px;line-height:1;white-space:nowrap;overflow:hidden;letter-spacing:0.15px">Прич</div>
<div style="left:850px;top:363px;width:65px;height:14px;font-size:14px;line-height:1;white-space:nowrap;overflow:hidden;text-align:right;letter-spacing:-0.5px">43.90</div>
<div style="left:78px;top:382px;width:22px;height:14px;font-size:14px;line-height:1;white-space:nowrap;overflow:hidden;letter-spacing:-1.1px">01</div>
<div style="left:158px;top:382px;width:12px;height:14px;font-size:14px;line-height:1;white-space:nowrap;overflow:hidden">1</div>
<div style="left:177px;top:382px;width:90px;height:14px;font-size:14px;line-height:1;white-space:nowrap;overflow:hidden;letter-spacing:-1.1px">0015</div>
<div style="left:274px;top:382px;width:102px;height:14px;font-size:14px;line-height:1;white-space:nowrap;overflow:hidden;letter-spacing:0.15px">Оглезнева Ульяна</div>
<div style="left:380px;top:382px;width:31px;height:14px;font-size:14px;line-height:1;white-space:nowrap;overflow:hidden;letter-spacing:-1.6px">001</div>
<div style="left:415px;top:382px;width:40px;height:14px;font-size:14px;line-height:1;white-space:nowrap;overflow:hidden;letter-spacing:0.15px">Прич</div>
<div style="left:850px;top:382px;width:65px;height:14px;font-size:14px;line-height:1;white-space:nowrap;overflow:hidden;text-align:right;letter-spacing:-0.5px">16.80</div>
<div style="left:78px;top:401px;width:22px;height:14px;font-size:14px;line-height:1;white-space:nowrap;overflow:hidden;letter-spacing:-1.1px">01</div>
<div style="left:158px;top:401px;width:12px;height:14px;font-size:14px;line-height:1;white-space:nowrap;overflow:hidden">1</div>
<div style="left:177px;top:401px;width:90px;height:14px;font-size:14px;line-height:1;white-space:nowrap;overflow:hidden;letter-spacing:-1.1px">0016</div>
<div style="left:274px;top:401px;width:102px;height:14px;font-size:14px;line-height:1;white-space:nowrap;overflow:hidden;letter-spacing:0.15px">Гулимова Минн</div>
<div style="left:380px;top:401px;width:31px;height:14px;font-size:14px;line-height:1;white-space:nowrap;overflow:hidden;letter-spacing:-1.6px">001</div>
<div style="left:415px;top:401px;width:40px;height:14px;font-size:14px;line-height:1;white-space:nowrap;overflow:hidden;letter-spacing:0.15px">Прич</div>
<div style="left:850px;top:401px;width:65px;height:14px;font-size:14px;line-height:1;white-space:nowrap;overflow:hidden;text-align:right;letter-spacing:-0.5px">31.50</div>
<div style="left:78px;top:420px;width:22px;height:14px;font-size:14px;line-height:1;white-space:nowrap;overflow:hidden;letter-spacing:-1.1px">01</div>
<div style="left:158px;top:420px;width:12px;height:14px;font-size:14px;line-height:1;white-space:nowrap;overflow:hidden">1</div>
<div style="left:177px;top:420px;width:90px;height:14px;font-size:14px;line-height:1;white-space:nowrap;overflow:hidden;letter-spacing:-1.1px">0017</div>
<div style="left:274px;top:420px;width:102px;height:14px;font-size:14px;line-height:1;white-space:nowrap;overflow:hidden;letter-spacing:0.15px">Окатышев Нникол</div>
<div style="left:380px;top:420px;width:31px;height:14px;font-size:14px;line-height:1;white-space:nowrap;overflow:hidden;letter-spacing:-1.6px">001</div>
<div style="left:415px;top:420px;width:40px;height:14px;font-size:14px;line-height:1;white-space:nowrap;overflow:hidden;letter-spacing:0.15px">Прич</div>
<div style="left:850px;top:420px;width:65px;height:14px;font-size:14px;line-height:1;white-space:nowrap;overflow:hidden;text-align:right;letter-spacing:-0.5px">44.00</div>
<div style="left:78px;top:439px;width:22px;height:14px;font-size:14px;line-height:1;white-space:nowrap;overflow:hidden;letter-spacing:-1.1px">01</div>
<div style="left:158px;top:439px;width:12px;height:14px;font-size:14px;line-height:1;white-space:nowrap;overflow:hidden">1</div>
<div style="left:177px;top:439px;width:90px;height:14px;font-size:14px;line-height:1;white-space:nowrap;overflow:hidden;letter-spacing:-1.1px">0018</div>
<div style="left:274px;top:439px;width:102px;height:14px;font-size:14px;line-height:1;white-space:nowrap;overflow:hidden;letter-spacing:0.15px">Коротаев Алексей</div>
<div style="left:380px;top:439px;width:31px;height:14px;font-size:14px;line-height:1;white-space:nowrap;overflow:hidden;letter-spacing:-1.6px">001</div>
<div style="left:415px;top:439px;width:40px;height:14px;font-size:14px;line-height:1;white-space:nowrap;overflow:hidden;letter-spacing:0.15px">Прич</div>
<div style="left:850px;top:439px;width:65px;height:14px;font-size:14px;line-height:1;white-space:nowrap;overflow:hidden;text-align:right;letter-spacing:-0.5px">43.80</div>
<div style="left:78px;top:458px;width:22px;height:14px;font-size:14px;line-height:1;white-space:nowrap;overflow:hidden;letter-spacing:-1.1px">01</div>
<div style="left:158px;top:458px;width:12px;height:14px;font-size:14px;line-height:1;white-space:nowrap;overflow:hidden">1</div>
<div style="left:177px;top:458px;width:90px;height:14px;font-size:14px;line-height:1;white-space:nowrap;overflow:hidden;letter-spacing:-1.1px">0019</div>
<div style="left:274px;top:458px;width:102px;height:14px;font-size:14px;line-height:1;white-space:nowrap;overflow:hidden;letter-spacing:0.15px">Макаров Алексей</div>
<div style="left:380px;top:458px;width:31px;height:14px;font-size:14px;line-height:1;white-space:nowrap;overflow:hidden;letter-spacing:-1.6px">001</div>
<div style="left:415px;top:458px;width:40px;height:14px;font-size:14px;line-height:1;white-space:nowrap;overflow:hidden;letter-spacing:0.15px">Прич</div>
<div style="left:850px;top:458px;width:65px;height:14px;font-size:14px;line-height:1;white-space:nowrap;overflow:hidden;text-align:right;letter-spacing:-0.5px">16.80</div>
<div style="left:1002px;top:113px;width:15px;height:365px;background-color:#fff;background-image:repeating-conic-gradient(#d4d0c8 0 25%,#fff 0 50%);background-size:2px 2px"></div>
<div class="raised" style="left:1002px;top:113px;width:15px;height:15px;background:#d4d0c8"></div>
<svg style="left:1005px;top:118px" width="9" height="5" viewBox="0 0 9 5"><path d="M0.5 4.5 L4.5 0.5 L8.5 4.5 Z" fill="#000"/></svg>
<div class="raised" style="left:1002px;top:145px;width:15px;height:303px;background:#d4d0c8"></div>
<div class="raised" style="left:1002px;top:464px;width:15px;height:15px;background:#d4d0c8"></div>
<svg style="left:1005px;top:469px" width="9" height="5" viewBox="0 0 9 5"><path d="M0.5 0.5 L4.5 4.5 L8.5 0.5 Z" fill="#000"/></svg>
<div style="left:6px;top:479px;width:996px;height:15px;background-color:#fff;background-image:repeating-conic-gradient(#d4d0c8 0 25%,#fff 0 50%);background-size:2px 2px"></div>
<div style="left:6px;top:479px;width:5px;height:15px;background:#000"></div>
<div class="raised" style="left:11px;top:479px;width:16px;height:15px;background:#d4d0c8"></div>
<svg style="left:16px;top:482px" width="5" height="9" viewBox="0 0 5 9"><path d="M4.5 0.5 L0.5 4.5 L4.5 8.5 Z" fill="#000"/></svg>
<div class="raised" style="left:27px;top:479px;width:53px;height:15px;background:#d4d0c8"></div>
<div class="raised" style="left:987px;top:479px;width:15px;height:15px;background:#d4d0c8"></div>
<svg style="left:992px;top:482px" width="5" height="9" viewBox="0 0 5 9"><path d="M0.5 0.5 L4.5 4.5 L0.5 8.5 Z" fill="#000"/></svg>
<div style="left:1002px;top:479px;width:15px;height:15px;background:#d4d0c8"></div>
<svg style="left:1004px;top:481px" width="12" height="12" viewBox="0 0 12 12"><path d="M11 3 L3 11 M11 7 L7 11 M11 1 L1 11" stroke="#fff" stroke-width="1"/><path d="M11.5 3.5 L3.5 11.5 M11.5 7.5 L7.5 11.5 M11.5 0.5 L0.5 11.5" stroke="#808080" stroke-width="1"/></svg>
<div style="left:3px;top:682px;width:1021px;height:1px;background:#808080"></div>
<div style="left:3px;top:683px;width:1021px;height:1px;background:#fff"></div>
<div style="left:3px;top:684px;width:1021px;height:31px;background:#d4d0c8"></div>
<div style="left:13px;top:684px;width:991px;height:27px;background:#dcdcf8"></div>
<div style="left:5px;top:686px;width:3px;height:26px;border-left:1px solid #fff;border-top:1px solid #fff;border-right:1px solid #808080;border-bottom:1px solid #808080"></div>
<div style="left:3px;top:715px;width:1021px;height:1px;background:#808080"></div>
<div style="left:3px;top:716px;width:1021px;height:1px;background:#fff"></div>
<div style="left:1010px;top:683px;width:1px;height:33px;background:#808080"></div>
<div style="left:1011px;top:683px;width:1px;height:33px;background:#fff"></div>
<span class="t" style="left:4px;top:724px;font-size:11px">Пункты, применимые универсально</span>
<div style="left:3px;top:717px;width:1021px;height:1px;background:#808080"></div>
<div style="left:3px;top:718px;width:1021px;height:1px;background:#fff"></div>
<div style="left:927px;top:719px;width:1px;height:20px;background:#000"></div>
<div style="left:928px;top:719px;width:1px;height:20px;background:#fff"></div>
<div class="sunken" style="left:930px;top:720px;width:28px;height:19px"></div>
<div class="sunken" style="left:960px;top:720px;width:30px;height:19px"></div>
<div class="sunken" style="left:992px;top:720px;width:32px;height:19px"></div>
<div style="left:0px;top:739px;width:1024px;height:29px;background:#d4d0c8"></div>
<div style="left:0px;top:740px;width:1024px;height:1px;background:#fff"></div>
<span class="t" style="left:17px;top:512px;color:#008000;font-weight:bold;font-style:italic;font-size:14px;letter-spacing:0.2px">Клавиша F9 или опция "Раскрыть" - вызов экрана "Лицевые счета квартиросъемщиков"</span>
<div style="left:500px;top:512px;width:417px;text-align:right;color:#008000;font-weight:bold;font-style:italic;font-size:14px;letter-spacing:0.2px;line-height:1;white-space:nowrap">для текущей записи</div>
<div style="left:10px;top:545px;font-family:&quot;Liberation Mono&quot;,monospace;font-weight:bold;font-size:14px;letter-spacing:0.6px;color:#000080;white-space:pre;line-height:16px">  11       Яблокова Евгения Сергеевна</div>
<div style="left:10px;top:561px;font-family:&quot;Liberation Mono&quot;,monospace;font-weight:bold;font-size:14px;letter-spacing:0.6px;color:#000080;white-space:pre;line-height:16px">Площадь: общая  34.10 жилая  16.80 Прописано  1</div>
<div style="left:10px;top:577px;font-family:&quot;Liberation Mono&quot;,monospace;font-weight:bold;font-size:14px;letter-spacing:0.6px;color:#000080;white-space:pre;line-height:16px"> 12 Ветеран труд для  1</div>
<div style="left:10px;top:593px;font-family:&quot;Liberation Mono&quot;,monospace;font-weight:bold;font-size:14px;letter-spacing:0.6px;color:#000080;white-space:pre;line-height:16px"></div>
<div style="left:10px;top:609px;font-family:&quot;Liberation Mono&quot;,monospace;font-weight:bold;font-size:14px;letter-spacing:0.6px;color:#000080;white-space:pre;line-height:16px"></div>
<div style="left:10px;top:625px;font-family:&quot;Liberation Mono&quot;,monospace;font-weight:bold;font-size:14px;letter-spacing:0.6px;color:#000080;white-space:pre;line-height:16px"> Сальдо вх.   1623.95 Начислено  1961.61 Оплачено  1961.61</div>
<span class="t" style="left:141px;top:657px;color:#800000;font-weight:bold;font-style:italic;font-size:14px;letter-spacing:0.2px">Код группы</span>
<div style="left:104px;top:684px;width:30px;height:27px;background:#f8d8d8"></div>
<svg style="left:17px;top:687px" width="24" height="24" viewBox="0 0 24 24" shape-rendering="crispEdges"><g shape-rendering="geometricPrecision"><circle cx="8.5" cy="8" r="7.5" fill="#303030"/><path d="M2 9 q6 5 13 0" stroke="#101010" stroke-width="2" fill="none"/><circle cx="6" cy="5" r="2" fill="#707070"/><circle cx="15" cy="15" r="8.5" fill="#d01818"/><circle cx="15" cy="15" r="5.5" fill="#f03030"/><circle cx="13" cy="12" r="2" fill="#ff8080"/></g></svg>
<svg style="left:47px;top:687px" width="24" height="24" viewBox="0 0 24 24" shape-rendering="crispEdges"><path d="M6.5 7 q0 -6 5.5 -6 q5.5 0 5.5 6 q0 4 -3 7 l-0.5 8 h-4 l-0.5 -8 q-3 -3 -3 -7z" fill="#ffff00" stroke="#000" stroke-width="2"/><path d="M10 10 l2 3 l2 -3 M12 13 v8" stroke="#c0c000" fill="none"/><path d="M1 9h2M21 9h2M3 2l1 1M21 2l-1 1M2 21l3 -3M22 21l-3 -3" stroke="#000"/></svg>
<svg style="left:77px;top:687px" width="24" height="24" viewBox="0 0 24 24" shape-rendering="crispEdges"><path d="M4 4h8q5 0 5 5v2h-4v-1q0 -2 -2 -2H4z" fill="#a0a0a0" stroke="#000"/><path d="M12 12 h6 l2 10 h-9 z" fill="#40e0e0" opacity="0.9"/><path d="M13 14h1M16 15h1M14 18h1M17 19h1" stroke="#fff"/></svg>
<svg style="left:107px;top:687px" width="24" height="24" viewBox="0 0 24 24" shape-rendering="crispEdges"><path d="M4 4h8q5 0 5 5v2h-4v-1q0 -2 -2 -2H4z" fill="#a0a0a0" stroke="#000"/><path d="M12 12 h6 l2 10 h-9 z" fill="#40d0d0" opacity="0.9"/><path d="M13 14h1M16 15h1M14 18h1M17 19h1" stroke="#fff"/></svg>
<svg style="left:137px;top:687px" width="24" height="24" viewBox="0 0 24 24" shape-rendering="crispEdges"><rect x="1" y="3" width="22" height="2" fill="#000"/><rect x="2" y="7" width="4" height="10" fill="#c0c0c0" stroke="#000"/><rect x="8" y="7" width="6" height="15" fill="#c0c0c0" stroke="#000"/><path d="M19 21 V8" stroke="#000080" stroke-width="1.5"/><path d="M16 10 L19 6 L22 10Z" fill="#000080"/></svg>
<svg style="left:167px;top:687px" width="24" height="24" viewBox="0 0 24 24" shape-rendering="crispEdges"><rect x="8" y="11" width="8" height="3" fill="#fff" stroke="#000"/></svg>
<svg style="left:197px;top:687px" width="24" height="24" viewBox="0 0 24 24" shape-rendering="crispEdges"><path d="M10 3 h10 l3 3 v8 l-3 3 h-6 l-6 6 h-6 l8 -8 v-8 z" fill="#a0a0a0" stroke="#000"/><rect x="13" y="5" width="8" height="8" fill="#d8d8f8" stroke="#000"/><path d="M3 20 l8 -8" stroke="#000"/></svg>
<svg style="left:227px;top:687px" width="24" height="24" viewBox="0 0 24 24" shape-rendering="crispEdges"><rect x="0" y="1" width="24" height="22" fill="#b0b0b0"/><path d="M0 1 L24 23 M24 1 L0 23 M12 1 V23 M0 12 H24" stroke="#30c0ff" stroke-width="3"/><path d="M4 1 L20 23 M0 8 L24 16" stroke="#ff40a0" stroke-width="2"/><path d="M20 1 L4 23" stroke="#40e040" stroke-width="3"/><circle cx="12" cy="12" r="3" fill="#fff" stroke="#000"/></svg>
<svg style="left:257px;top:687px" width="24" height="24" viewBox="0 0 24 24" shape-rendering="crispEdges"><rect x="1" y="6" width="6" height="16" fill="#208080" stroke="#000"/><rect x="7" y="3" width="7" height="19" fill="#2040c0" stroke="#000"/><rect x="14" y="5" width="7" height="17" fill="#a0a040" stroke="#000"/></svg>
<svg style="left:287px;top:687px" width="24" height="24" viewBox="0 0 24 24" shape-rendering="crispEdges"><rect x="1" y="2" width="22" height="5" fill="#000"/><rect x="10" y="7" width="4" height="15" fill="#000"/></svg>
<svg style="left:317px;top:687px" width="24" height="24" viewBox="0 0 24 24" shape-rendering="crispEdges"><path d="M3 8 L12 2 L21 8 V21 H3 Z" fill="#e8e8e8" stroke="#000"/><rect x="6" y="10" width="4" height="4" fill="#ffff80" stroke="#000"/><rect x="14" y="10" width="4" height="4" fill="#ffff80" stroke="#000"/><rect x="1" y="18" width="16" height="4" fill="#e02020"/><rect x="8" y="15" width="6" height="3" fill="#40c0a0"/><circle cx="12" cy="4" r="2" fill="#ffff40"/></svg>
<svg style="left:347px;top:687px" width="24" height="24" viewBox="0 0 24 24" shape-rendering="crispEdges"><rect x="3" y="3" width="18" height="19" fill="#d0d0d0" stroke="#000"/><path d="M3 9h18M3 15h18" stroke="#000"/><path d="M8 6h8M8 12h8M8 18h8" stroke="#808080"/></svg>
<svg style="left:377px;top:687px" width="24" height="24" viewBox="0 0 24 24" shape-rendering="crispEdges"><path d="M2 3 V21 H18" fill="none" stroke="#000" stroke-width="1.5"/><path d="M16 2 V18 M19 2 V18 M22 2 V21" stroke="#000"/><path d="M17 16 l3 4 l3 -2" stroke="#000" fill="none"/></svg>
<svg style="left:407px;top:687px" width="24" height="24" viewBox="0 0 24 24" shape-rendering="crispEdges"><path d="M3 2 h12 l6 6 v14 h-18 z" fill="#ffffc0" stroke="#800000"/><path d="M3 6 h18 M8 2 v20" stroke="#800000"/></svg>
<svg style="left:437px;top:687px" width="24" height="24" viewBox="0 0 24 24" shape-rendering="crispEdges"><path d="M1 6 h12 v3 H1z" fill="#ffff40" stroke="#000"/><circle cx="17" cy="8" r="6" fill="#e0e040" stroke="#000"/><rect x="1" y="13" width="22" height="8" fill="#b0b0b0" opacity="0.8"/><path d="M2 10h10" stroke="#808000"/></svg>
<svg style="left:467px;top:687px" width="24" height="24" viewBox="0 0 24 24" shape-rendering="crispEdges"><rect x="10" y="5" width="3" height="10" rx="1" fill="#c01020"/><rect x="10" y="17" width="3" height="3" fill="#c01020"/></svg>
<svg style="left:497px;top:687px" width="24" height="24" viewBox="0 0 24 24" shape-rendering="crispEdges"><rect x="0" y="1" width="24" height="22" fill="#f0f0f0"/><path d="M2 22 l5 -10 l1 -5 l2 -4 h4 l8 -1 v2 l-4 1 l1 3 l-2 -1 l-3 1 l-1 4 l2 3 l-1 7 h-3 l1 -6 l-2 -2 l-4 9z" fill="#101830"/></svg>
<svg style="left:527px;top:687px" width="24" height="24" viewBox="0 0 24 24" shape-rendering="crispEdges"><path d="M7 3 H22 V18 L18 22 L14 18 L10 22 L2 14 L6 10 L3 7 Z" fill="#000"/><path d="M9 5 H20 V16 L17 13 L13 17 L10 14 L6 14 L10 10 L7 7 Z" fill="#c8c8c8"/></svg>
<svg style="left:557px;top:687px" width="24" height="24" viewBox="0 0 24 24" shape-rendering="crispEdges"><rect x="0" y="1" width="24" height="22" fill="#c0c0c0"/><path d="M3 8 l7 -6 l8 8 l-7 7z" fill="#e0e0e0" stroke="#000"/><rect x="12" y="11" width="11" height="11" fill="#808080" stroke="#000"/></svg>
<svg style="left:587px;top:687px" width="24" height="24" viewBox="0 0 24 24" shape-rendering="crispEdges"><path d="M2 9 l8 -7 l8 8 l-7 7z" fill="#000"/><rect x="10" y="10" width="12" height="12" fill="#000"/><path d="M8 2 q3 -2 4 2" stroke="#000" fill="none"/></svg>
<svg style="left:617px;top:687px" width="24" height="24" viewBox="0 0 24 24" shape-rendering="crispEdges"><rect x="8" y="2" width="12" height="5" fill="#d0d0d0" stroke="#000"/><rect x="2" y="9" width="18" height="6" fill="#d0d0d0" stroke="#000"/><path d="M22 1 V22" stroke="#000" stroke-width="2"/><path d="M4 19 H20" stroke="#000080" stroke-width="1.5"/><path d="M18 17 l3 2 l-3 2z" fill="#000080"/></svg>
<svg style="left:647px;top:687px" width="24" height="24" viewBox="0 0 24 24" shape-rendering="crispEdges"><rect x="2" y="8" width="5" height="12" fill="#d0d0d0" stroke="#000"/><rect x="8" y="2" width="7" height="18" fill="#d0d0d0" stroke="#000"/><path d="M19 10 V20" stroke="#000080" stroke-width="1.5"/><path d="M17 18 l2 3 l2 -3z" fill="#000080"/><path d="M1 22 H23" stroke="#000" stroke-width="1.5"/></svg>
<svg style="left:677px;top:687px" width="24" height="24" viewBox="0 0 24 24" shape-rendering="crispEdges"><rect x="0" y="1" width="24" height="22" fill="#a0d8e8"/><path d="M10 4 q-6 0 -6 4 q0 3 5 4 q4 1 2 5 q-2 3 -8 2" fill="none" stroke="#203040" stroke-width="3"/><path d="M20 2 L6 22" stroke="#203040" stroke-width="2"/><circle cx="17" cy="16" r="4" fill="none" stroke="#203040" stroke-width="3"/></svg>
<svg style="left:707px;top:687px" width="24" height="24" viewBox="0 0 24 24" shape-rendering="crispEdges"><path d="M4 18 V9 q0 -7 8 -7 q8 0 8 7 V18 h-5 V9 q0 -2 -3 -2 q-3 0 -3 2 V18 z" fill="#e02020" stroke="#000"/><rect x="4" y="15" width="5" height="3" fill="#fff" stroke="#000"/><rect x="15" y="15" width="5" height="3" fill="#fff" stroke="#000"/><path d="M2 22 h4 M18 22 h4" stroke="#000"/></svg>
<svg style="left:737px;top:687px" width="24" height="24" viewBox="0 0 24 24" shape-rendering="crispEdges"><rect x="7" y="5" width="10" height="5" fill="#fff" stroke="#000"/><rect x="4" y="10" width="17" height="7" rx="2" fill="#c0c0c0" stroke="#000"/><path d="M5 14 h15" stroke="#000"/></svg>
<svg style="left:767px;top:687px" width="24" height="24" viewBox="0 0 24 24" shape-rendering="crispEdges"><path d="M12 1 L23 10 H17 V22 H7 V10 H1 Z" fill="#fff" stroke="#0020a0" stroke-width="2"/><path d="M12 1 L1 10 H7 V22" fill="none" stroke="#000080" stroke-width="3"/></svg>
<svg style="left:797px;top:687px" width="24" height="24" viewBox="0 0 24 24" shape-rendering="crispEdges"><path d="M12 23 L23 14 H17 V2 H7 V14 H1 Z" fill="#fff" stroke="#0020a0" stroke-width="2"/><path d="M1 14 L12 23 L23 14" fill="none" stroke="#000080" stroke-width="3"/><rect x="9" y="2" width="6" height="12" fill="#c0c0c0"/></svg>
<svg style="left:827px;top:687px" width="24" height="24" viewBox="0 0 24 24" shape-rendering="crispEdges"><rect x="1" y="1" width="22" height="22" rx="6" fill="#70c060"/><circle cx="12" cy="12" r="8" fill="#90d080"/><path d="M12 6v12M6 12h12" stroke="#fff" stroke-width="4"/></svg>
<svg style="left:857px;top:687px" width="24" height="24" viewBox="0 0 24 24" shape-rendering="crispEdges"><path d="M1 2V22" stroke="#000080"/><path d="M4 3h10l4 4v14H4z" fill="#fff" stroke="#000"/><path d="M6 8h6M6 11h5M6 14h5M6 17h5" stroke="#000080"/><circle cx="14" cy="13" r="4" fill="#e0e0f0" stroke="#000" stroke-width="1.5"/><path d="M17 16 l5 5" stroke="#000" stroke-width="2"/></svg>
<svg style="left:887px;top:687px" width="24" height="24" viewBox="0 0 24 24" shape-rendering="crispEdges"><rect x="5" y="5" width="15" height="14" fill="#c0c0c0"/><path d="M7 7 L18 17 M18 7 L7 17" stroke="#e01010" stroke-width="2"/></svg>
<svg style="left:917px;top:687px" width="24" height="24" viewBox="0 0 24 24" shape-rendering="crispEdges"><path d="M2 2 L7 10 L12 8 L18 11 L23 2" fill="none" stroke="#000"/><path d="M1 4 l5 7 l-4 2z" fill="#30a0a0"/><path d="M19 9 l4 -2 v4z" fill="#e0e040" stroke="#000" stroke-width="0.5"/><path d="M3 12 q4 -3 9 -2 l9 0 l1 3 l-6 6 l-5 2 l-6 -3 z" fill="#fff" stroke="#000"/><path d="M6 16 l3 3 M8 15 l3 3 M10 14 l3 3 M12 11 h5 l-3 3" stroke="#000" fill="none"/></svg>
<svg style="left:947px;top:687px" width="24" height="24" viewBox="0 0 24 24" shape-rendering="crispEdges"><rect x="2" y="1" width="22" height="22" fill="#108010"/><path d="M8 1 h4 v6 h6 l-8 16 h-4 z" fill="#d8d8f8"/><path d="M12 12 h3 l-2 5 h-3z" fill="#108010"/></svg>
<svg style="left:977px;top:687px" width="24" height="24" viewBox="0 0 24 24" shape-rendering="crispEdges"><path d="M1 2 H7 L12 8 L17 2 H23 L15 12 L23 22 H17 L12 16 L7 22 H1 L9 12 Z" fill="#101060"/><path d="M4 20 L11 13 L21 4" stroke="#c8c8d8" stroke-width="2.5"/><path d="M2 4 q4 -1 7 4" stroke="#e8e8f0" stroke-width="2.5" fill="none"/></svg>
<div class="raised" style="left:2px;top:742px;width:51px;height:23px;background:#d4d0c8"></div>
<svg style="left:4px;top:744px" width="16" height="16" viewBox="0 0 16 16" shape-rendering="crispEdges"><path d="M1 3 q3 -2 6 0 v6 q-3 -2 -6 0z" fill="#e05020"/><path d="M8 3 q3 2 6 0 v6 q-3 2 -6 0z" fill="#40b040"/><path d="M1 10 q3 -2 6 0 v5 q-3 -2 -6 0z" fill="#2060e0"/><path d="M8 10 q3 2 6 0 v5 q-3 2 -6 0z" fill="#f0c020"/></svg>
<span class="t" style="left:21px;top:748px;font-weight:bold;font-size:11px;letter-spacing:0.5px">Пуск</span>
<div style="left:58px;top:742px;width:63px;height:23px;border-top:1px solid #404040;border-left:1px solid #404040;border-right:1px solid #fff;border-bottom:1px solid #fff;box-shadow:inset 1px 1px 0 #808080;background-color:#fff;background-image:repeating-conic-gradient(#d4d0c8 0 25%,#fff 0 50%);background-size:2px 2px"></div>
<svg style="left:63px;top:745px" width="16" height="16" viewBox="0 0 16 16" shape-rendering="crispEdges"><rect x="0" y="0" width="16" height="16" rx="2" fill="#901818"/><path d="M8 2 L8 11 L2 11 Z" fill="#fff"/><path d="M9 4 L9 11 L13 11 Z" fill="#fff"/><path d="M2 12 L14 12 L12 14 L4 14 Z" fill="#fff"/></svg>
<span class="t" style="left:83px;top:749px;font-weight:bold;font-size:11px;letter-spacing:0.3px">РКо...</span>
<div class="raised" style="left:124px;top:742px;width:64px;height:23px;background:#d4d0c8"></div>
<svg style="left:130px;top:745px" width="16" height="16" viewBox="0 0 16 16" shape-rendering="crispEdges"><path d="M3 4 h10 l-2 11 h-6z" fill="#c0a060"/><path d="M4 2 l2 6 M8 1 v7 M12 2 l-2 6" stroke="#e04040" stroke-width="1.5"/><path d="M6 2 l1 6" stroke="#40a040" stroke-width="1.5"/></svg>
<span class="t" style="left:147px;top:749px;font-size:11px">Punk...</span>
<svg style="left:198px;top:745px" width="16" height="16" viewBox="0 0 16 16" shape-rendering="crispEdges"><rect x="1" y="1" width="14" height="14" fill="#0040e0"/><path d="M5 2v12M11 2v12M2 4h2M2 7h2M2 10h2M12 4h2M12 7h2M12 10h2" stroke="#fff"/><rect x="1" y="14" width="14" height="2" fill="#000080"/></svg>
<svg style="left:221px;top:745px" width="16" height="16" viewBox="0 0 16 16" shape-rendering="crispEdges"><circle cx="8" cy="8" r="6" fill="#202020"/><path d="M2 2l12 12M14 2L2 14M8 0v16M0 8h16" stroke="#404040" stroke-width="2"/><circle cx="8" cy="8" r="3" fill="#808080"/></svg>
<svg style="left:244px;top:745px" width="16" height="16" viewBox="0 0 16 16" shape-rendering="crispEdges"><circle cx="8" cy="8" r="7" fill="#60b030"/><circle cx="8" cy="8" r="5" fill="#80d040"/><path d="M5 6 l3 6 l3 -6z" fill="#e06020"/></svg>
<svg style="left:267px;top:745px" width="16" height="16" viewBox="0 0 16 16" shape-rendering="crispEdges"><circle cx="8" cy="8" r="7" fill="#2080e0"/><path d="M3 6 q5 -5 10 2 q-4 6 -9 3z" fill="#40b040"/><path d="M1 10 q7 -6 15 -6" stroke="#e0e0ff" stroke-width="1.5" fill="none"/></svg>
<svg style="left:290px;top:745px" width="16" height="16" viewBox="0 0 16 16" shape-rendering="crispEdges"><circle cx="8" cy="8" r="7" fill="#2050c0" stroke="#a0b0e0"/><circle cx="8" cy="8" r="5" fill="#fff"/><path d="M6 6 q0 -2 2 -2 q2 0 2 2 q0 1 -2 2 v1" stroke="#2050c0" stroke-width="1.5" fill="none"/><rect x="7" y="10.5" width="2" height="2" fill="#2050c0"/></svg>
<svg style="left:313px;top:745px" width="16" height="16" viewBox="0 0 16 16" shape-rendering="crispEdges"><path d="M3 1 L15 8 L3 15 Z" fill="#20a020"/></svg>
<svg style="left:336px;top:745px" width="16" height="16" viewBox="0 0 16 16" shape-rendering="crispEdges"><rect x="0" y="3" width="16" height="10" fill="#f0f0e0"/><path d="M1 5v6M4 5v6M1 8h3M6 5l4 6M10 5l-4 6" stroke="#408040" stroke-width="1.5"/><path d="M11 5h2q2 0 2 3q0 3 -2 3h-2z" fill="#e0a040"/></svg>
<svg style="left:359px;top:745px" width="16" height="16" viewBox="0 0 16 16" shape-rendering="crispEdges"><path d="M1 8 l7 -6 l8 6 l-7 6z" fill="#40a080"/><path d="M3 8 l5 -4 l6 4 l-5 4z" fill="#f0f0a0"/><path d="M1 9 l8 6 l7 -6" stroke="#606060" fill="none"/><rect x="6" y="5" width="4" height="4" fill="#e04080"/></svg>
<svg style="left:382px;top:745px" width="16" height="16" viewBox="0 0 16 16" shape-rendering="crispEdges"><path d="M2 2h9l-6 12h5" stroke="#c09030" stroke-width="3" fill="none"/><circle cx="12" cy="10" r="3.5" fill="#2080c0"/></svg>
<svg style="left:405px;top:745px" width="16" height="16" viewBox="0 0 16 16" shape-rendering="crispEdges"><path d="M2 4h8l3 3v9H2z" fill="#fff" stroke="#000"/><path d="M4 8h6M4 10h6M4 12h6" stroke="#000"/><path d="M8 3 q0 -3 4 -3 q4 0 3 3 q-1 2 -3 3 v2" fill="none" stroke="#f0d000" stroke-width="2.5"/><rect x="10.5" y="10" width="3" height="3" fill="#f0d000"/></svg>
<svg style="left:428px;top:745px" width="16" height="16" viewBox="0 0 16 16" shape-rendering="crispEdges"><rect x="0" y="1" width="16" height="14" fill="#000"/><rect x="1" y="2" width="14" height="12" fill="#fff"/><path d="M2 4h5l-3 8M9 6h5l-5 6h5" stroke="#000" stroke-width="2" fill="none"/></svg>
<svg style="left:451px;top:745px" width="16" height="16" viewBox="0 0 16 16" shape-rendering="crispEdges"><rect x="0" y="0" width="16" height="16" rx="3" fill="#3080e0"/><path d="M4 14 L8 2 L12 14 M6 10 h4" stroke="#fff" stroke-width="2" fill="none"/></svg>
<svg style="left:474px;top:745px" width="16" height="16" viewBox="0 0 16 16" shape-rendering="crispEdges"><rect x="1" y="1" width="14" height="14" fill="#f8f8f8" stroke="#c0c0c0"/><rect x="3" y="3" width="2" height="2" fill="#e04040"/><rect x="7" y="3" width="2" height="2" fill="#40a040"/><rect x="11" y="3" width="2" height="2" fill="#4040e0"/><rect x="3" y="7" width="2" height="2" fill="#e0a040"/><rect x="7" y="7" width="2" height="2" fill="#e040e0"/><rect x="11" y="7" width="2" height="2" fill="#40e0e0"/><rect x="3" y="11" width="2" height="2" fill="#a0e040"/><rect x="7" y="11" width="2" height="2" fill="#e0e040"/><rect x="11" y="11" width="2" height="2" fill="#e04080"/></svg>
<svg style="left:497px;top:745px" width="16" height="16" viewBox="0 0 16 16" shape-rendering="crispEdges"><path d="M2 6 l4 -5 l2 4 l6 -4 l-1 9 q-3 5 -9 5 q-3 -3 -2 -9z" fill="#f0b030"/></svg>
<svg style="left:520px;top:745px" width="16" height="16" viewBox="0 0 16 16" shape-rendering="crispEdges"><path d="M3 6 l5 -4 l6 4 v7 l-6 3 l-5 -3z" fill="#909090"/><path d="M3 6 l6 3 l5 -3 M9 9 v7" stroke="#606060" fill="none"/></svg>
<svg style="left:543px;top:745px" width="16" height="16" viewBox="0 0 16 16" shape-rendering="crispEdges"><rect x="1" y="1" width="14" height="14" rx="2" fill="#20a040"/><path d="M3 8h9M9 4l4 4l-4 4" stroke="#fff" stroke-width="2" fill="none"/></svg>
<svg style="left:566px;top:745px" width="16" height="16" viewBox="0 0 16 16" shape-rendering="crispEdges"><rect x="0" y="0" width="16" height="16" fill="#b01010"/><path d="M3 3h5M3 3v10M3 8h4M9 8h5l-5 6h5" stroke="#fff" stroke-width="2" fill="none"/></svg>
<svg style="left:589px;top:745px" width="16" height="16" viewBox="0 0 16 16" shape-rendering="crispEdges"><circle cx="8" cy="8" r="7.5" fill="#e03020"/><path d="M8 8 L1 12 A7.5 7.5 0 0 0 15 12Z" fill="#30a040"/><path d="M8 8 L15 12 A7.5 7.5 0 0 0 8 0.5 Z" fill="#f0c020"/><circle cx="8" cy="8" r="3.5" fill="#2070e0" stroke="#fff"/></svg>
<svg style="left:612px;top:745px" width="16" height="16" viewBox="0 0 16 16" shape-rendering="crispEdges"><circle cx="8" cy="6" r="6" fill="#20a020"/><circle cx="5" cy="5" r="2" fill="#60d060"/><rect x="7" y="10" width="2" height="6" fill="#805020"/><path d="M3 15h10" stroke="#805020" stroke-width="2"/></svg>
<svg style="left:635px;top:745px" width="16" height="16" viewBox="0 0 16 16" shape-rendering="crispEdges"><path d="M2 1h9l3 3v12H2z" fill="#fff" stroke="#404080"/><path d="M4 5h7M4 7h7M4 9h7M4 11h7" stroke="#2040c0"/><path d="M8 8 l4 6" stroke="#e02020" stroke-width="1.5"/></svg>
<div style="left:835px;top:746px;width:17px;height:16px;background:#0a246a"></div>
<span class="t" style="left:836px;top:749px;color:#fff;font-size:11px">EN</span>
<svg style="left:863px;top:745px" width="16" height="17" viewBox="0 0 16 17" shape-rendering="crispEdges"><rect x="1" y="1" width="13" height="12" fill="#ffffc0" stroke="#000"/><path d="M4 13 l0 3 l3 -3" fill="#ffffc0" stroke="#000"/><path d="M5 5 q0 -2 2.5 -2 q2.5 0 2.5 2 q0 1.5 -2.5 2.5 v1" stroke="#000" stroke-width="1.6" fill="none"/><rect x="6.5" y="9.5" width="2" height="2" fill="#000"/></svg>
<div style="left:884px;top:744px;width:1px;height:20px;background:#808080"></div>
<div style="left:885px;top:744px;width:1px;height:20px;background:#fff"></div>
<div style="left:856px;top:744px;width:1px;height:20px;background:#808080"></div>
<div style="left:857px;top:744px;width:1px;height:20px;background:#fff"></div>
<svg style="left:889px;top:745px" width="10" height="16" viewBox="0 0 10 16" shape-rendering="crispEdges"><rect x="3" y="1" width="6" height="4" fill="none" stroke="#000"/><rect x="1" y="3" width="6" height="4" fill="#fff" stroke="#000"/><path d="M2 11 h6 l-3 3z" fill="#000"/></svg>
<div style="left:906px;top:743px;width:116px;height:22px;border-top:1px solid #808080;border-left:1px solid #808080;border-right:1px solid #fff;border-bottom:1px solid #fff"></div>
<svg style="left:910px;top:746px" width="16" height="16" viewBox="0 0 16 16" shape-rendering="crispEdges"><rect x="5" y="1" width="10" height="9" fill="#4060a0" stroke="#203060"/><rect x="1" y="5" width="10" height="9" fill="#6080c0" stroke="#203060"/><path d="M2 15 h10" stroke="#202040"/></svg>
<svg style="left:928px;top:746px" width="16" height="16" viewBox="0 0 16 16" shape-rendering="crispEdges"><rect x="0" y="0" width="8" height="8" fill="#e04020"/><rect x="8" y="0" width="8" height="8" fill="#20a0e0"/><rect x="0" y="8" width="8" height="8" fill="#40b040"/><rect x="8" y="8" width="8" height="8" fill="#f0c020"/><path d="M0 4 h16 M6 0 v16" stroke="#fff" stroke-width="0.5" opacity="0.4"/></svg>
<svg style="left:946px;top:746px" width="16" height="16" viewBox="0 0 16 16" shape-rendering="crispEdges"><circle cx="7" cy="8" r="6" fill="#a0a0a0"/><circle cx="7" cy="8" r="3.5" fill="#606060"/><path d="M10 2 q6 6 0 12" stroke="#8080c0" fill="none"/></svg>
<div style="left:963px;top:746px;width:16px;height:16px;background:#0a1060"></div>
<svg style="left:963px;top:746px" width="16" height="16" viewBox="0 0 16 16" shape-rendering="crispEdges"><circle cx="8" cy="8" r="2.5" fill="#f0e020"/><path d="M4 4 q-3 4 0 8 M12 4 q3 4 0 8" stroke="#f0e020" stroke-width="1.5" fill="none"/></svg>
<span class="t" style="left:988px;top:749px;font-size:11px">9:10</span>
<div style="left:444px;top:41px;width:373px;height:613px;background:#d4d0c8;border-top:1px solid #d4d0c8;border-left:1px solid #d4d0c8;border-right:1px solid #404040;border-bottom:1px solid #404040"></div>
<div style="left:445px;top:42px;width:371px;height:1px;background:#fff"></div>
<div style="left:445px;top:42px;width:1px;height:611px;background:#fff"></div>
<div style="left:445px;top:652px;width:371px;height:1px;background:#808080"></div>
<div style="left:815px;top:42px;width:1px;height:611px;background:#808080"></div>
<svg style="left:447px;top:45px;overflow:visible" width="16" height="16" viewBox="0 0 16 16"><path d="M4.5 0.5h8l1.5 5h-11z" fill="#fff" stroke="#000"/><path d="M6 2.5h6" stroke="#000"/><path d="M2 5.5h12q1.5 0 1.5 2v5q0 1.5 -1.5 1.5h-12q-1.5 0 -1.5 -1.5v-5q0 -2 1.5 -2z" fill="#d0d0d0" stroke="#000"/><path d="M1 8.5h14M1 11h14" stroke="#000"/><path d="M12.5 6.5v7" stroke="#808080" stroke-dasharray="1 1"/></svg>
<span class="t" style="left:467px;top:47px;font-size:11px">Печатать</span>
<div style="left:594px;top:47px;width:202px;text-align:right;font-size:11px;line-height:1">Alt+P</div>
<svg style="left:447px;top:64px;overflow:visible" width="16" height="16" viewBox="0 0 16 16"><path d="M8 1 L15 8 H11 V15 H5 V8 H1 Z" fill="#d0d0f0" stroke="#0000a0" stroke-width="1.4"/><path d="M1.5 8 L8 1.5 M5.5 8.5 V15" stroke="#000080" stroke-width="2.5"/></svg>
<span class="t" style="left:467px;top:66px;font-size:11px">Идти на начало</span>
<div style="left:594px;top:66px;width:202px;text-align:right;font-size:11px;line-height:1">Ctrl+Home</div>
<svg style="left:447px;top:83px;overflow:visible" width="16" height="16" viewBox="0 0 16 16"><path d="M8 15 L15 8 H11 V1 H5 V8 H1 Z" fill="#d0d0f0" stroke="#0000a0" stroke-width="1.4"/><path d="M1.5 8.5 L8 15 M5.5 1 V8" stroke="#000080" stroke-width="2.5"/></svg>
<span class="t" style="left:467px;top:85px;font-size:11px">Идти на конец</span>
<div style="left:594px;top:85px;width:202px;text-align:right;font-size:11px;line-height:1">Ctrl+End</div>
<svg style="left:447px;top:102px;overflow:visible" width="16" height="16" viewBox="0 0 16 16"><path d="M1 3 q3 -3 6 0 l5 5 q2 1 2 4 l-3 3 h-3 l-3 -4 l-2 -5 z" fill="#fff" stroke="#000" stroke-width="1.2"/><path d="M1 3 q2 -2 4 0 l1 3 l-3 1z" fill="#000"/><path d="M7 9 l2 3 M9 8 l2 3 M10 14 h4" stroke="#000" stroke-width="1.2"/></svg>
<span class="t" style="left:467px;top:104px;font-size:11px">Выбор</span>
<div style="left:594px;top:104px;width:202px;text-align:right;font-size:11px;line-height:1">F4</div>
<svg style="left:447px;top:121px;overflow:visible" width="16" height="16" viewBox="0 0 16 16"><circle cx="8" cy="8" r="7.5" fill="#38a038"/><circle cx="8" cy="8" r="5.5" fill="#70c870"/><path d="M8 4.5v7M4.5 8h7" stroke="#fff" stroke-width="2.5"/></svg>
<span class="t" style="left:467px;top:123px;font-size:11px">Добавить запись</span>
<div style="left:594px;top:123px;width:202px;text-align:right;font-size:11px;line-height:1">F5</div>
<svg style="left:447px;top:140px;overflow:visible" width="16" height="16" viewBox="0 0 16 16"><path d="M1.5 1.5h7l2 2v11h-9z" fill="#e8e8ff" stroke="#000"/><path d="M3 5h6M3 7h6M3 9h6M3 11h6" stroke="#2020a0"/><path d="M8 1 l2 3" stroke="#000" stroke-width="1.5"/><circle cx="10" cy="10" r="2.5" fill="#d0d8f0" stroke="#000"/><path d="M12 12 l3 3" stroke="#000" stroke-width="2"/></svg>
<span class="t" style="left:467px;top:142px;font-size:11px">Установка фильтра</span>
<div style="left:594px;top:142px;width:202px;text-align:right;font-size:11px;line-height:1">Alt+F6</div>
<svg style="left:447px;top:159px;overflow:visible" width="16" height="16" viewBox="0 0 16 16"><path d="M2 5 L4 1 H7 V5 H9 V1 H12 L14 5 L15 9 V14 H10 V9 H6 V14 H1 V9 Z" fill="#000"/></svg>
<span class="t" style="left:467px;top:161px;font-size:11px">Поиск в поле</span>
<div style="left:594px;top:161px;width:202px;text-align:right;font-size:11px;line-height:1">F7</div>
<svg style="left:447px;top:178px;overflow:visible" width="16" height="16" viewBox="0 0 16 16"><path d="M2 2 L14 14 M14 2 L2 14" stroke="#d01818" stroke-width="2"/></svg>
<span class="t" style="left:467px;top:180px;font-size:11px">Удалить / восстановить текущую запись</span>
<div style="left:594px;top:180px;width:202px;text-align:right;font-size:11px;line-height:1">F8</div>
<span class="t" style="left:468px;top:200px;color:#fff;font-size:11px">Смена полей дублирования при добавлении</span>
<span class="t" style="left:467px;top:199px;color:#808080;font-size:11px">Смена полей дублирования при добавлении</span>
<svg style="left:447px;top:216px;overflow:visible" width="16" height="16" viewBox="0 0 16 16"><path d="M2 2 q6 -2 12 0 l-1 3h-10z" fill="#909090"/><path d="M3 5 h10 l-1 10 h-8z" fill="#a0a8a0" stroke="#202020"/><path d="M4 6 h5 v8 h-4z" fill="#20a040"/><path d="M6 9 l1 2 l2 -3" stroke="#c0ffc0" fill="none"/></svg>
<span class="t" style="left:467px;top:218px;font-size:11px">Сжатие файла</span>
<div style="left:594px;top:218px;width:202px;text-align:right;font-size:11px;line-height:1">Shift+F8</div>
<span class="t" style="left:467px;top:237px;font-size:11px">Смена режима просмотра удаленных записей</span>
<div style="left:594px;top:237px;width:202px;text-align:right;font-size:11px;line-height:1">Alt+F11</div>
<span class="t" style="left:468px;top:257px;color:#fff;font-size:11px">Без сортировки / с сортировкой</span>
<span class="t" style="left:467px;top:256px;color:#808080;font-size:11px">Без сортировки / с сортировкой</span>
<div style="left:595px;top:257px;width:202px;text-align:right;color:#fff;font-size:11px;line-height:1">Alt+U</div>
<div style="left:594px;top:256px;width:202px;text-align:right;color:#808080;font-size:11px;line-height:1">Alt+U</div>
<svg style="left:447px;top:273px;overflow:visible" width="16" height="16" viewBox="0 0 16 16"><path d="M8 1 q7 0 7 6.5 q0 5.5 -6 6 l-3 2.5 v-2.5 q-5 -1 -5 -6 q0 -6.5 7 -6.5z" fill="#e0e8ff" stroke="#000"/><rect x="7" y="3" width="2" height="2" fill="#0000e0"/><path d="M6.5 6.5h2v5h1" stroke="#0000e0" stroke-width="2" fill="none"/></svg>
<span class="t" style="left:467px;top:275px;font-size:11px">Текущая информация</span>
<div style="left:594px;top:275px;width:202px;text-align:right;font-size:11px;line-height:1">Alt+I</div>
<svg style="left:447px;top:292px;overflow:visible" width="16" height="16" viewBox="0 0 16 16"><path d="M4 5 q0 -4 4 -4 q4 0 4 3.5 q0 2 -3 3.5 v2" fill="none" stroke="#fff" stroke-width="3" transform="translate(1 1)"/><path d="M4 5 q0 -4 4 -4 q4 0 4 3.5 q0 2 -3 3.5 v2" fill="none" stroke="#808080" stroke-width="3"/><rect x="7" y="12" width="3" height="3" fill="#808080"/></svg>
<span class="t" style="left:468px;top:295px;color:#fff;font-size:11px">Дополнительная информация</span>
<span class="t" style="left:467px;top:294px;color:#808080;font-size:11px">Дополнительная информация</span>
<div style="left:595px;top:295px;width:202px;text-align:right;color:#fff;font-size:11px;line-height:1">Ctrl+F1</div>
<div style="left:594px;top:294px;width:202px;text-align:right;color:#808080;font-size:11px;line-height:1">Ctrl+F1</div>
<svg style="left:447px;top:311px;overflow:visible" width="16" height="16" viewBox="0 0 16 16"><rect x="1.5" y="10.5" width="4" height="3" fill="#fff" stroke="#000"/><rect x="5.5" y="7.5" width="4" height="3" fill="#fff" stroke="#000"/><rect x="9.5" y="3.5" width="4" height="4" fill="#808080" stroke="#000"/><path d="M7 15h1M9 15h1M11 15h1" stroke="#000"/></svg>
<span class="t" style="left:467px;top:313px;font-size:11px">Печать структуры файла</span>
<div style="left:594px;top:313px;width:202px;text-align:right;font-size:11px;line-height:1">Ctrl+S</div>
<svg style="left:447px;top:330px;overflow:visible" width="16" height="16" viewBox="0 0 16 16"><rect x="1" y="10" width="5" height="4" fill="#000"/><rect x="5" y="7" width="5" height="4" fill="#000"/><rect x="9" y="3" width="5" height="5" fill="#000"/><path d="M7 15h1M9 15h1M11 15h1" stroke="#000"/></svg>
<span class="t" style="left:467px;top:332px;font-size:11px">Печать структуры файла с расшифровкой</span>
<div style="left:594px;top:332px;width:202px;text-align:right;font-size:11px;line-height:1">Ctrl+Q</div>
<span class="t" style="left:467px;top:351px;font-size:11px">Копировать</span>
<div style="left:594px;top:351px;width:202px;text-align:right;font-size:11px;line-height:1">Alt+F3</div>
<svg style="left:447px;top:368px;overflow:visible" width="16" height="16" viewBox="0 0 16 16"><circle cx="8" cy="8" r="8" fill="#0000e8"/><path d="M8 3.5v9M3.5 8h9" stroke="#d8d8c0" stroke-width="3"/></svg>
<span class="t" style="left:467px;top:370px;font-size:11px">Просуммировать колонку</span>
<div style="left:594px;top:370px;width:202px;text-align:right;font-size:11px;line-height:1">Shift+F4</div>
<svg style="left:447px;top:387px;overflow:visible" width="16" height="16" viewBox="0 0 16 16"><path d="M1.5 1.5h7l3 3v9h-10z" fill="#e8e8e0" stroke="#000"/><circle cx="9.5" cy="10" r="3" fill="#a8c8b8" stroke="#000"/><path d="M11.5 12.5 l3 3" stroke="#000" stroke-width="2"/></svg>
<span class="t" style="left:467px;top:389px;font-size:11px">Установка фильтра по текущему полю</span>
<div style="left:594px;top:389px;width:202px;text-align:right;font-size:11px;line-height:1">Shift+F2</div>
<svg style="left:447px;top:406px;overflow:visible" width="16" height="16" viewBox="0 0 16 16"><path d="M13 3 q-2 -3 -7 -2 q-5 2 -3 6 q2 2 6 2 q3 1 2 3 q-2 2 -6 1" fill="none" stroke="#000" stroke-width="3.5"/><path d="M5 9 l3 -2 M8 11 l3 2" stroke="#e0e0e0" stroke-width="1"/></svg>
<span class="t" style="left:467px;top:408px;font-size:11px">Вычисления с заменой для текущего поля</span>
<div style="left:594px;top:408px;width:202px;text-align:right;font-size:11px;line-height:1">Shift+F3</div>
<svg style="left:447px;top:425px;overflow:visible" width="16" height="16" viewBox="0 0 16 16"><rect x="1" y="1" width="14" height="14" fill="#101830"/><rect x="3" y="3" width="10" height="5" fill="#5080c0"/><rect x="2" y="10" width="12" height="4" fill="#a0a0a0"/><path d="M3 12h10" stroke="#606060" stroke-dasharray="1 1"/></svg>
<span class="t" style="left:467px;top:427px;font-size:11px">Произвольные вычисления без замены</span>
<div style="left:594px;top:427px;width:202px;text-align:right;font-size:11px;line-height:1">Alt+V</div>
<svg style="left:447px;top:444px;overflow:visible" width="16" height="16" viewBox="0 0 16 16"><path d="M1 1h8l4 4v10H1z" fill="#101040"/><path d="M6 6 h4 v5 h-4z" fill="none" stroke="#c0c0ff"/><circle cx="9" cy="10" r="2" fill="#e0e0ff"/><path d="M11 12 l3 3" stroke="#000" stroke-width="2"/></svg>
<span class="t" style="left:467px;top:446px;font-size:11px">Установка фильтра по выражению</span>
<div style="left:594px;top:446px;width:202px;text-align:right;font-size:11px;line-height:1">Alt+F</div>
<svg style="left:447px;top:463px;overflow:visible" width="16" height="16" viewBox="0 0 16 16"><path d="M1 2 l4 5 l-2 1z" fill="#30a090"/><path d="M15 2 l-4 5 l2 1z" fill="#202020"/><path d="M2 8 q6 -3 12 0 l-1 4 q-5 3 -10 0z" fill="#101010"/><circle cx="6" cy="9" r="1.5" fill="#fff"/><circle cx="10" cy="9" r="1.5" fill="#fff"/><path d="M4 14 l-2 1 M12 14 l2 1" stroke="#808080"/></svg>
<span class="t" style="left:467px;top:465px;font-size:11px">Разблокировка всех файлов</span>
<div style="left:594px;top:465px;width:202px;text-align:right;font-size:11px;line-height:1">Ctrl+B</div>
<span class="t" style="left:467px;top:484px;font-size:11px">Переиндексация файла</span>
<div style="left:594px;top:484px;width:202px;text-align:right;font-size:11px;line-height:1">Ctrl+F7</div>
<svg style="left:447px;top:501px;overflow:visible" width="16" height="16" viewBox="0 0 16 16"><path d="M2 -1h9l4 4v11H2z" fill="#000"/></svg>
<span class="t" style="left:467px;top:503px;font-size:11px">Печатать последний отчет</span>
<div style="left:594px;top:503px;width:202px;text-align:right;font-size:11px;line-height:1">Alt+K</div>
<span class="t" style="left:468px;top:523px;color:#fff;font-size:11px">Вернуться к значениям предыдущего месяца</span>
<span class="t" style="left:467px;top:522px;color:#808080;font-size:11px">Вернуться к значениям предыдущего месяца</span>
<svg style="left:447px;top:539px;overflow:visible" width="16" height="16" viewBox="0 0 16 16"><rect x="1" y="2" width="14" height="11" fill="#303030"/><path d="M2 4 l4 3 l-3 4 M9 3 l5 2 l-2 6" stroke="#909090" fill="none"/><circle cx="8" cy="7" r="2" fill="#c0c0c0"/></svg>
<span class="t" style="left:467px;top:541px;font-size:11px">Сортировка по наименованию</span>
<svg style="left:447px;top:558px;overflow:visible" width="16" height="16" viewBox="0 0 16 16"><path d="M4 4 q4 -3 8 0 q1.5 3 0 5 l-1 2 h-6 l-1 -2 q-2 -3 0 -5z" fill="#000"/><path d="M8 6 q3 -1 3.5 1.5 q0 2 -2.5 2.5 l-1 -1z" fill="#fff"/><rect x="5" y="11" width="6" height="1.5" fill="#000"/><rect x="4" y="12.5" width="8" height="1.5" fill="#000"/></svg>
<span class="t" style="left:467px;top:560px;font-size:11px">Корректировка пользователя</span>
<svg style="left:447px;top:577px;overflow:visible" width="16" height="16" viewBox="0 0 16 16"><path d="M1 2 l2 -1 h2 l1 1 l3 0 l1 -1 h2 l1 1 v9 l-8 6 l-4 -1z" fill="#e8e820" stroke="#000" stroke-width="1.3"/><path d="M4 15 l5 -6 l8 -2 l-5 7z" fill="#f0f040" stroke="#000"/></svg>
<span class="t" style="left:467px;top:579px;font-size:11px">Использование недоступных подпунктов в Выполнить</span>
<div style="left:594px;top:579px;width:202px;text-align:right;font-size:11px;line-height:1">Alt+F7</div>
<span class="t" style="left:468px;top:599px;color:#fff;font-size:11px">Корректировка</span>
<span class="t" style="left:467px;top:598px;color:#808080;font-size:11px">Корректировка</span>
<div style="left:595px;top:599px;width:202px;text-align:right;color:#fff;font-size:11px;line-height:1">F6</div>
<div style="left:594px;top:598px;width:202px;text-align:right;color:#808080;font-size:11px;line-height:1">F6</div>
<svg style="left:447px;top:615px;overflow:visible" width="16" height="16" viewBox="0 0 16 16"><path d="M2 1 L14 12 M14 1 L2 12" stroke="#909090" stroke-width="3.5"/><rect x="3" y="13" width="10" height="2" fill="#909090"/></svg>
<span class="t" style="left:468px;top:618px;color:#fff;font-size:11px">Удалить все записи и сжать файл</span>
<span class="t" style="left:467px;top:617px;color:#808080;font-size:11px">Удалить все записи и сжать файл</span>
<div style="left:595px;top:618px;width:202px;text-align:right;color:#fff;font-size:11px;line-height:1">Alt+Del</div>
<div style="left:594px;top:617px;width:202px;text-align:right;color:#808080;font-size:11px;line-height:1">Alt+Del</div>
<svg style="left:447px;top:634px;overflow:visible" width="16" height="16" viewBox="0 0 16 16"><path d="M0 2h3l2 9h9l1 -6H4" fill="none" stroke="#909090" stroke-width="1.5"/><path d="M5 5h9v5h-8z" fill="#a0a0a0"/><path d="M7 6v3M9 6v3M11 6v3" stroke="#d0d0d0"/><rect x="5" y="12" width="3" height="3" fill="#909090"/><rect x="11" y="12" width="3" height="3" fill="#909090"/></svg>
<span class="t" style="left:468px;top:637px;color:#fff;font-size:11px">Удалить выборку</span>
<span class="t" style="left:467px;top:636px;color:#808080;font-size:11px">Удалить выборку</span>
<div style="left:595px;top:637px;width:202px;text-align:right;color:#fff;font-size:11px;line-height:1">Alt+F8</div>
<div style="left:594px;top:636px;width:202px;text-align:right;color:#808080;font-size:11px;line-height:1">Alt+F8</div>
</body></html>
